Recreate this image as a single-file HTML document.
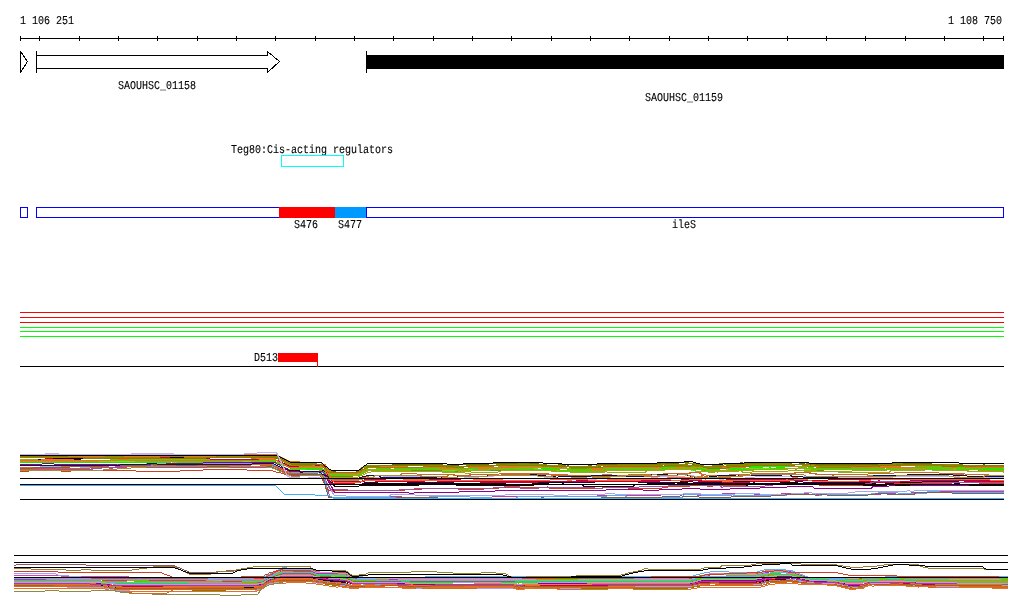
<!DOCTYPE html>
<html><head><meta charset="utf-8"><title>Genome browser</title>
<style>
html,body{margin:0;padding:0;background:#fff;}
svg{display:block;will-change:transform}
.t{font-family:"Liberation Mono","DejaVu Sans Mono",monospace;font-size:12.0px;fill:#000;stroke:#000;stroke-width:0.12px;text-rendering:geometricPrecision;}
</style></head><body>
<svg width="1024" height="611" viewBox="0 0 1024 611" shape-rendering="crispEdges">
<rect x="20" y="38" width="984" height="1" fill="#000"/>
<rect x="20" y="36" width="1" height="5" fill="#000"/>
<rect x="1003" y="36" width="1" height="5" fill="#000"/>
<rect x="39" y="36" width="1" height="5" fill="#000"/>
<rect x="79" y="36" width="1" height="5" fill="#000"/>
<rect x="118" y="36" width="1" height="5" fill="#000"/>
<rect x="157" y="36" width="1" height="5" fill="#000"/>
<rect x="197" y="36" width="1" height="5" fill="#000"/>
<rect x="236" y="36" width="1" height="5" fill="#000"/>
<rect x="275" y="36" width="1" height="5" fill="#000"/>
<rect x="315" y="36" width="1" height="5" fill="#000"/>
<rect x="354" y="36" width="1" height="5" fill="#000"/>
<rect x="393" y="36" width="1" height="5" fill="#000"/>
<rect x="433" y="36" width="1" height="5" fill="#000"/>
<rect x="472" y="36" width="1" height="5" fill="#000"/>
<rect x="511" y="36" width="1" height="5" fill="#000"/>
<rect x="551" y="36" width="1" height="5" fill="#000"/>
<rect x="590" y="36" width="1" height="5" fill="#000"/>
<rect x="629" y="36" width="1" height="5" fill="#000"/>
<rect x="669" y="36" width="1" height="5" fill="#000"/>
<rect x="708" y="36" width="1" height="5" fill="#000"/>
<rect x="747" y="36" width="1" height="5" fill="#000"/>
<rect x="787" y="36" width="1" height="5" fill="#000"/>
<rect x="826" y="36" width="1" height="5" fill="#000"/>
<rect x="865" y="36" width="1" height="5" fill="#000"/>
<rect x="905" y="36" width="1" height="5" fill="#000"/>
<rect x="944" y="36" width="1" height="5" fill="#000"/>
<rect x="983" y="36" width="1" height="5" fill="#000"/>
<text transform="translate(20,24) scale(0.8332,1)" class="t">1 106 251</text>
<text transform="translate(948,24) scale(0.8332,1)" class="t">1 108 750</text>
<polygon points="20.5,51.5 27.5,61.5 20.5,72.5" fill="#fff" stroke="#000" stroke-width="1"/>
<polyline points="36.5,55.5 267.5,55.5 267.5,51.5 279.5,61.5 267.5,72.5 267.5,68.5 36.5,68.5" fill="none" stroke="#000" stroke-width="1"/>
<rect x="36" y="51" width="1" height="22" fill="#000"/>
<text transform="translate(118,89) scale(0.8332,1)" class="t">SAOUHSC_01158</text>
<rect x="366" y="55" width="638" height="14" fill="#000"/>
<rect x="366" y="51" width="1" height="22" fill="#000"/>
<text transform="translate(645,101) scale(0.8332,1)" class="t">SAOUHSC_01159</text>
<text transform="translate(231,153) scale(0.8332,1)" class="t">Teg80:Cis-acting regulators</text>
<rect x="281.5" y="155.5" width="62" height="11" fill="none" stroke="#00ffff" stroke-width="1"/>
<rect x="20.5" y="207.5" width="7" height="10" fill="#fff" stroke="#0000ff" stroke-width="1"/>
<rect x="36.5" y="207.5" width="243" height="10" fill="#fff" stroke="#0000ff" stroke-width="1"/>
<rect x="366.5" y="207.5" width="637" height="10" fill="#fff" stroke="#0000ff" stroke-width="1"/>
<rect x="279" y="207" width="56" height="11" fill="#ff0000"/>
<rect x="335" y="207" width="31" height="11" fill="#0099ff"/>
<text transform="translate(294,228) scale(0.8332,1)" class="t">S476</text>
<text transform="translate(338,228) scale(0.8332,1)" class="t">S477</text>
<text transform="translate(672,228) scale(0.8332,1)" class="t">ileS</text>
<rect x="20" y="312" width="984" height="1" fill="#ff0000"/>
<rect x="20" y="317" width="984" height="1" fill="#ff0000"/>
<rect x="20" y="322" width="984" height="1" fill="#ff0000"/>
<rect x="20" y="327" width="984" height="1" fill="#00ff00"/>
<rect x="20" y="331" width="984" height="1" fill="#00ff00"/>
<rect x="20" y="336" width="984" height="1" fill="#00ff00"/>
<rect x="20" y="366" width="984" height="1" fill="#000"/>
<text transform="translate(254,361) scale(0.8332,1)" class="t">D513</text>
<rect x="278" y="353" width="40" height="9" fill="#ff0000"/>
<rect x="317" y="353" width="1" height="14" fill="#ff0000"/>
<g fill="none" stroke-width="1" stroke-linecap="square" stroke-linejoin="miter">
<polyline points="20.5,459.5 80.5,459.5 81.5,458.5 125.5,458.5 126.5,459.5 275.5,459.5 276.5,460.5 277.5,460.5 278.5,461.5 279.5,461.5 280.5,462.5 282.5,462.5 283.5,463.5 284.5,463.5 285.5,464.5 286.5,464.5 287.5,465.5 288.5,465.5 289.5,466.5 299.5,466.5 300.5,465.5 318.5,465.5 319.5,466.5 320.5,467.5 321.5,468.5 322.5,470.5 323.5,471.5 324.5,472.5 325.5,474.5 326.5,475.5 327.5,477.5 328.5,478.5 329.5,479.5 330.5,481.5 331.5,482.5 332.5,484.5 361.5,484.5 362.5,483.5 363.5,483.5 364.5,482.5 377.5,482.5 378.5,483.5 406.5,483.5 407.5,482.5 453.5,482.5 454.5,483.5 491.5,483.5 492.5,482.5 594.5,482.5 595.5,481.5 637.5,481.5 638.5,482.5 679.5,482.5 680.5,481.5 692.5,481.5 693.5,482.5 721.5,482.5 722.5,481.5 753.5,481.5 754.5,483.5 784.5,483.5 785.5,482.5 794.5,482.5 795.5,481.5 802.5,481.5 803.5,482.5 884.5,482.5 885.5,481.5 886.5,481.5 887.5,482.5 902.5,482.5 903.5,481.5 958.5,481.5 959.5,482.5 1003.5,482.5" stroke="#300040"/>
<polyline points="20.5,457.5 49.5,457.5 50.5,458.5 95.5,458.5 96.5,457.5 199.5,457.5 200.5,456.5 245.5,456.5 246.5,457.5 277.5,457.5 278.5,458.5 279.5,458.5 280.5,459.5 281.5,459.5 282.5,460.5 283.5,460.5 284.5,461.5 285.5,462.5 286.5,462.5 287.5,463.5 288.5,464.5 289.5,465.5 296.5,465.5 297.5,464.5 299.5,464.5 300.5,465.5 308.5,465.5 309.5,464.5 319.5,464.5 320.5,466.5 321.5,467.5 322.5,469.5 323.5,470.5 324.5,472.5 325.5,473.5 326.5,474.5 327.5,476.5 328.5,477.5 329.5,479.5 330.5,480.5 331.5,481.5 332.5,483.5 333.5,484.5 334.5,486.5 358.5,486.5 359.5,485.5 418.5,485.5 419.5,484.5 455.5,484.5 456.5,485.5 533.5,485.5 534.5,484.5 582.5,484.5 583.5,486.5 633.5,486.5 634.5,484.5 676.5,484.5 677.5,483.5 687.5,483.5 688.5,484.5 689.5,484.5 690.5,485.5 747.5,485.5 748.5,484.5 781.5,484.5 782.5,483.5 799.5,483.5 800.5,484.5 844.5,484.5 845.5,485.5 886.5,485.5 887.5,484.5 894.5,484.5 895.5,485.5 921.5,485.5 922.5,484.5 955.5,484.5 956.5,485.5 1003.5,485.5" stroke="#200000"/>
<polyline points="20.5,455.5 120.5,455.5 121.5,456.5 135.5,456.5 136.5,457.5 255.5,457.5 256.5,456.5 277.5,456.5 278.5,457.5 279.5,457.5 280.5,458.5 281.5,458.5 282.5,459.5 283.5,459.5 284.5,460.5 287.5,460.5 288.5,461.5 289.5,461.5 290.5,462.5 291.5,462.5 292.5,463.5 299.5,463.5 300.5,464.5 325.5,464.5 326.5,467.5 327.5,470.5 328.5,473.5 329.5,476.5 330.5,479.5 331.5,481.5 332.5,484.5 363.5,484.5 364.5,483.5 505.5,483.5 506.5,482.5 531.5,482.5 532.5,483.5 548.5,483.5 549.5,482.5 562.5,482.5 563.5,484.5 646.5,484.5 647.5,483.5 674.5,483.5 675.5,482.5 687.5,482.5 688.5,483.5 779.5,483.5 780.5,482.5 797.5,482.5 798.5,483.5 875.5,483.5 876.5,482.5 884.5,482.5 885.5,483.5 897.5,483.5 898.5,482.5 953.5,482.5 954.5,483.5 959.5,483.5 960.5,484.5 992.5,484.5 993.5,482.5 1003.5,482.5" stroke="#100010"/>
<polyline points="20.5,461.5 152.5,461.5 153.5,460.5 176.5,460.5 177.5,459.5 224.5,459.5 225.5,460.5 244.5,460.5 245.5,461.5 275.5,461.5 276.5,462.5 277.5,462.5 278.5,463.5 279.5,463.5 280.5,464.5 281.5,464.5 282.5,465.5 283.5,464.5 284.5,465.5 285.5,465.5 286.5,466.5 287.5,466.5 288.5,467.5 289.5,467.5 290.5,468.5 299.5,468.5 300.5,469.5 318.5,469.5 319.5,470.5 320.5,470.5 321.5,471.5 322.5,471.5 323.5,472.5 324.5,473.5 325.5,473.5 326.5,474.5 327.5,475.5 328.5,475.5 329.5,476.5 352.5,476.5 353.5,475.5 357.5,475.5 358.5,474.5 359.5,474.5 360.5,473.5 361.5,472.5 362.5,471.5 363.5,471.5 364.5,470.5 454.5,470.5 455.5,471.5 470.5,471.5 471.5,470.5 500.5,470.5 501.5,469.5 534.5,469.5 535.5,470.5 550.5,470.5 551.5,471.5 569.5,471.5 570.5,472.5 591.5,472.5 592.5,470.5 604.5,470.5 605.5,469.5 664.5,469.5 665.5,468.5 691.5,468.5 692.5,467.5 694.5,467.5 695.5,468.5 700.5,468.5 701.5,469.5 703.5,469.5 704.5,470.5 707.5,470.5 708.5,471.5 730.5,471.5 731.5,470.5 749.5,470.5 750.5,469.5 751.5,469.5 752.5,468.5 810.5,468.5 811.5,469.5 816.5,469.5 817.5,470.5 823.5,470.5 824.5,469.5 877.5,469.5 878.5,468.5 879.5,468.5 880.5,469.5 931.5,469.5 932.5,470.5 966.5,470.5 967.5,471.5 977.5,471.5 978.5,470.5 1003.5,470.5" stroke="#6b8e23"/>
<polyline points="20.5,461.5 171.5,461.5 172.5,462.5 197.5,462.5 198.5,461.5 258.5,461.5 259.5,462.5 275.5,462.5 276.5,463.5 277.5,463.5 278.5,464.5 279.5,464.5 280.5,465.5 281.5,465.5 282.5,466.5 283.5,466.5 284.5,467.5 285.5,467.5 286.5,469.5 287.5,469.5 288.5,470.5 299.5,470.5 300.5,469.5 323.5,469.5 324.5,470.5 325.5,470.5 326.5,471.5 327.5,471.5 328.5,472.5 329.5,473.5 330.5,473.5 331.5,474.5 335.5,474.5 336.5,475.5 357.5,475.5 358.5,474.5 359.5,474.5 360.5,472.5 362.5,472.5 363.5,471.5 365.5,471.5 366.5,470.5 367.5,470.5 368.5,469.5 441.5,469.5 442.5,470.5 457.5,470.5 458.5,469.5 473.5,469.5 474.5,468.5 487.5,468.5 488.5,467.5 512.5,467.5 513.5,468.5 537.5,468.5 538.5,469.5 556.5,469.5 557.5,470.5 591.5,470.5 592.5,469.5 651.5,469.5 652.5,468.5 687.5,468.5 688.5,469.5 690.5,469.5 691.5,470.5 694.5,470.5 695.5,471.5 717.5,471.5 718.5,470.5 725.5,470.5 726.5,469.5 738.5,469.5 739.5,468.5 803.5,468.5 804.5,469.5 886.5,469.5 887.5,468.5 888.5,468.5 889.5,469.5 939.5,469.5 940.5,468.5 953.5,468.5 954.5,469.5 1003.5,469.5" stroke="#50f010"/>
<polyline points="20.5,468.5 57.5,468.5 58.5,469.5 90.5,469.5 91.5,468.5 100.5,468.5 101.5,467.5 108.5,467.5 109.5,468.5 112.5,468.5 113.5,467.5 126.5,467.5 127.5,466.5 147.5,466.5 148.5,467.5 274.5,467.5 275.5,468.5 277.5,468.5 278.5,469.5 279.5,469.5 280.5,470.5 282.5,470.5 283.5,471.5 284.5,471.5 285.5,472.5 287.5,472.5 288.5,473.5 289.5,473.5 290.5,474.5 299.5,474.5 300.5,475.5 320.5,475.5 321.5,476.5 322.5,478.5 323.5,480.5 324.5,483.5 325.5,485.5 326.5,487.5 327.5,490.5 328.5,492.5 329.5,495.5 330.5,497.5 350.5,497.5 351.5,496.5 401.5,496.5 402.5,497.5 435.5,497.5 436.5,495.5 491.5,495.5 492.5,496.5 596.5,496.5 597.5,495.5 660.5,495.5 661.5,494.5 696.5,494.5 697.5,495.5 720.5,495.5 721.5,494.5 722.5,493.5 753.5,493.5 754.5,494.5 780.5,494.5 781.5,493.5 808.5,493.5 809.5,494.5 831.5,494.5 832.5,493.5 842.5,493.5 843.5,494.5 880.5,494.5 881.5,493.5 895.5,493.5 896.5,494.5 903.5,494.5 904.5,493.5 910.5,493.5 911.5,492.5 938.5,492.5 939.5,491.5 1003.5,491.5" stroke="#c040a0"/>
<polyline points="20.5,460.5 203.5,460.5 204.5,461.5 242.5,461.5 243.5,462.5 261.5,462.5 262.5,461.5 274.5,461.5 275.5,462.5 277.5,462.5 278.5,463.5 279.5,463.5 280.5,464.5 282.5,464.5 283.5,465.5 285.5,465.5 286.5,466.5 287.5,466.5 288.5,467.5 290.5,467.5 291.5,468.5 305.5,468.5 306.5,469.5 318.5,469.5 319.5,470.5 321.5,470.5 322.5,471.5 323.5,471.5 324.5,472.5 326.5,472.5 327.5,473.5 328.5,473.5 329.5,474.5 330.5,474.5 331.5,475.5 358.5,475.5 359.5,474.5 361.5,474.5 362.5,473.5 363.5,473.5 364.5,472.5 365.5,471.5 366.5,470.5 367.5,470.5 368.5,469.5 393.5,469.5 394.5,468.5 443.5,468.5 444.5,469.5 459.5,469.5 460.5,468.5 464.5,468.5 465.5,470.5 489.5,470.5 490.5,469.5 539.5,469.5 540.5,470.5 542.5,470.5 543.5,469.5 558.5,469.5 559.5,470.5 593.5,470.5 594.5,469.5 653.5,469.5 654.5,468.5 680.5,468.5 681.5,467.5 687.5,467.5 688.5,466.5 689.5,466.5 690.5,467.5 692.5,467.5 693.5,468.5 696.5,468.5 697.5,469.5 719.5,469.5 720.5,468.5 740.5,468.5 741.5,467.5 743.5,467.5 744.5,469.5 775.5,469.5 776.5,467.5 784.5,467.5 785.5,466.5 799.5,466.5 800.5,467.5 805.5,467.5 806.5,468.5 810.5,468.5 811.5,469.5 885.5,469.5 886.5,468.5 955.5,468.5 956.5,469.5 1003.5,469.5" stroke="#30e000"/>
<polyline points="20.5,462.5 55.5,462.5 56.5,461.5 77.5,461.5 78.5,460.5 134.5,460.5 135.5,461.5 176.5,461.5 177.5,462.5 274.5,462.5 275.5,463.5 276.5,463.5 277.5,464.5 278.5,464.5 279.5,465.5 280.5,465.5 281.5,466.5 283.5,466.5 284.5,467.5 285.5,467.5 286.5,468.5 287.5,468.5 288.5,469.5 299.5,469.5 300.5,468.5 321.5,468.5 322.5,469.5 323.5,469.5 324.5,470.5 325.5,470.5 326.5,471.5 327.5,471.5 328.5,472.5 329.5,472.5 330.5,473.5 331.5,473.5 332.5,474.5 345.5,474.5 346.5,475.5 355.5,475.5 356.5,474.5 357.5,474.5 358.5,473.5 359.5,472.5 360.5,472.5 361.5,471.5 362.5,471.5 363.5,470.5 364.5,470.5 365.5,469.5 375.5,469.5 376.5,468.5 390.5,468.5 391.5,469.5 438.5,469.5 439.5,468.5 451.5,468.5 452.5,469.5 467.5,469.5 468.5,468.5 476.5,468.5 477.5,469.5 497.5,469.5 498.5,468.5 511.5,468.5 512.5,467.5 547.5,467.5 548.5,468.5 566.5,468.5 567.5,469.5 600.5,469.5 601.5,468.5 661.5,468.5 662.5,467.5 687.5,467.5 688.5,466.5 692.5,466.5 693.5,467.5 697.5,467.5 698.5,468.5 700.5,468.5 701.5,469.5 704.5,469.5 705.5,470.5 727.5,470.5 728.5,469.5 745.5,469.5 746.5,468.5 748.5,468.5 749.5,467.5 762.5,467.5 763.5,466.5 807.5,466.5 808.5,467.5 813.5,467.5 814.5,468.5 856.5,468.5 857.5,467.5 872.5,467.5 873.5,466.5 899.5,466.5 900.5,467.5 930.5,467.5 931.5,468.5 944.5,468.5 945.5,467.5 963.5,467.5 964.5,468.5 1003.5,468.5" stroke="#30e000"/>
<polyline points="20.5,460.5 40.5,460.5 41.5,459.5 73.5,459.5 74.5,460.5 121.5,460.5 122.5,459.5 138.5,459.5 139.5,458.5 201.5,458.5 202.5,459.5 211.5,459.5 212.5,460.5 239.5,460.5 240.5,459.5 271.5,459.5 272.5,460.5 277.5,460.5 278.5,461.5 279.5,462.5 281.5,462.5 282.5,463.5 283.5,464.5 285.5,464.5 286.5,465.5 287.5,466.5 289.5,466.5 290.5,467.5 299.5,467.5 300.5,466.5 323.5,466.5 324.5,468.5 325.5,470.5 326.5,472.5 327.5,474.5 328.5,476.5 329.5,478.5 330.5,480.5 331.5,481.5 363.5,481.5 364.5,480.5 367.5,480.5 368.5,479.5 380.5,479.5 381.5,480.5 402.5,480.5 403.5,479.5 456.5,479.5 457.5,480.5 472.5,480.5 473.5,479.5 502.5,479.5 503.5,478.5 552.5,478.5 553.5,479.5 566.5,479.5 567.5,480.5 571.5,480.5 572.5,481.5 601.5,481.5 602.5,480.5 606.5,480.5 607.5,479.5 648.5,479.5 649.5,478.5 666.5,478.5 667.5,477.5 692.5,477.5 693.5,476.5 702.5,476.5 703.5,477.5 704.5,477.5 705.5,479.5 706.5,480.5 709.5,480.5 710.5,481.5 732.5,481.5 733.5,480.5 753.5,480.5 754.5,479.5 791.5,479.5 792.5,477.5 797.5,477.5 798.5,476.5 812.5,476.5 813.5,477.5 818.5,477.5 819.5,478.5 827.5,478.5 828.5,479.5 878.5,479.5 879.5,478.5 962.5,478.5 963.5,479.5 968.5,479.5 969.5,480.5 1003.5,480.5" stroke="#f07030"/>
<polyline points="20.5,461.5 50.5,461.5 51.5,460.5 88.5,460.5 89.5,461.5 98.5,461.5 99.5,460.5 109.5,460.5 110.5,459.5 275.5,459.5 276.5,460.5 277.5,460.5 278.5,461.5 279.5,461.5 280.5,462.5 281.5,462.5 282.5,463.5 283.5,464.5 284.5,464.5 285.5,465.5 286.5,465.5 287.5,466.5 288.5,466.5 289.5,467.5 297.5,467.5 298.5,468.5 299.5,468.5 300.5,467.5 317.5,467.5 318.5,469.5 319.5,469.5 320.5,470.5 321.5,470.5 322.5,471.5 323.5,472.5 324.5,473.5 325.5,474.5 326.5,474.5 327.5,475.5 328.5,476.5 329.5,477.5 357.5,477.5 358.5,476.5 359.5,476.5 360.5,475.5 362.5,475.5 363.5,474.5 364.5,474.5 365.5,473.5 366.5,473.5 367.5,472.5 370.5,472.5 371.5,471.5 454.5,471.5 455.5,472.5 464.5,472.5 465.5,473.5 470.5,473.5 471.5,472.5 497.5,472.5 498.5,471.5 500.5,471.5 501.5,470.5 550.5,470.5 551.5,471.5 569.5,471.5 570.5,472.5 604.5,472.5 605.5,471.5 606.5,471.5 607.5,472.5 645.5,472.5 646.5,470.5 664.5,470.5 665.5,469.5 690.5,469.5 691.5,468.5 692.5,468.5 693.5,469.5 700.5,469.5 701.5,470.5 703.5,470.5 704.5,471.5 707.5,471.5 708.5,472.5 714.5,472.5 715.5,471.5 730.5,471.5 731.5,470.5 741.5,470.5 742.5,472.5 751.5,472.5 752.5,471.5 787.5,471.5 788.5,470.5 816.5,470.5 817.5,471.5 837.5,471.5 838.5,472.5 889.5,472.5 890.5,470.5 897.5,470.5 898.5,469.5 931.5,469.5 932.5,470.5 966.5,470.5 967.5,471.5 1002.5,471.5 1003.5,472.5" stroke="#9aaa10"/>
<polyline points="20.5,471.5 28.5,471.5 29.5,470.5 38.5,470.5 39.5,469.5 48.5,469.5 49.5,470.5 60.5,470.5 61.5,471.5 70.5,471.5 71.5,470.5 135.5,470.5 136.5,471.5 179.5,471.5 180.5,470.5 202.5,470.5 203.5,469.5 246.5,469.5 247.5,470.5 272.5,470.5 273.5,471.5 275.5,471.5 276.5,472.5 280.5,472.5 281.5,473.5 283.5,473.5 284.5,474.5 286.5,474.5 287.5,473.5 288.5,474.5 312.5,474.5 313.5,475.5 319.5,475.5 320.5,476.5 321.5,477.5 322.5,479.5 323.5,481.5 324.5,483.5 325.5,485.5 326.5,486.5 327.5,488.5 328.5,490.5 404.5,490.5 405.5,489.5 421.5,489.5 422.5,488.5 457.5,488.5 458.5,489.5 483.5,489.5 484.5,488.5 498.5,488.5 499.5,487.5 546.5,487.5 547.5,486.5 548.5,487.5 549.5,488.5 601.5,488.5 602.5,487.5 627.5,487.5 628.5,488.5 661.5,488.5 662.5,487.5 667.5,487.5 668.5,486.5 689.5,486.5 690.5,485.5 706.5,485.5 707.5,486.5 712.5,486.5 713.5,485.5 745.5,485.5 746.5,486.5 764.5,486.5 765.5,485.5 766.5,484.5 818.5,484.5 819.5,485.5 862.5,485.5 863.5,484.5 864.5,484.5 865.5,483.5 871.5,483.5 872.5,482.5 893.5,482.5 894.5,483.5 951.5,483.5 952.5,484.5 978.5,484.5 979.5,483.5 1003.5,483.5" stroke="#d04020"/>
<polyline points="20.5,454.5 44.5,454.5 45.5,453.5 58.5,453.5 59.5,454.5 130.5,454.5 131.5,453.5 173.5,453.5 174.5,454.5 195.5,454.5 196.5,455.5 230.5,455.5 231.5,454.5 254.5,454.5 255.5,455.5 276.5,455.5 277.5,457.5 278.5,459.5 279.5,460.5 280.5,462.5 281.5,464.5 282.5,466.5 283.5,467.5 284.5,469.5 285.5,471.5 286.5,473.5 287.5,474.5 288.5,475.5 289.5,477.5 299.5,477.5 300.5,478.5 307.5,478.5 308.5,477.5 319.5,477.5 320.5,478.5 324.5,478.5 325.5,479.5 328.5,479.5 329.5,480.5 357.5,480.5 358.5,479.5 360.5,479.5 361.5,478.5 363.5,478.5 364.5,477.5 382.5,477.5 383.5,476.5 419.5,476.5 420.5,477.5 447.5,477.5 448.5,478.5 463.5,478.5 464.5,477.5 478.5,477.5 479.5,476.5 493.5,476.5 494.5,475.5 536.5,475.5 537.5,476.5 543.5,476.5 544.5,477.5 557.5,477.5 558.5,478.5 562.5,478.5 563.5,479.5 596.5,479.5 597.5,478.5 609.5,478.5 610.5,476.5 650.5,476.5 651.5,477.5 657.5,477.5 658.5,476.5 684.5,476.5 685.5,475.5 693.5,475.5 694.5,476.5 696.5,476.5 697.5,477.5 700.5,477.5 701.5,478.5 718.5,478.5 719.5,479.5 723.5,479.5 724.5,478.5 744.5,478.5 745.5,477.5 754.5,477.5 755.5,476.5 809.5,476.5 810.5,478.5 821.5,478.5 822.5,477.5 892.5,477.5 893.5,476.5 959.5,476.5 960.5,477.5 1003.5,477.5" stroke="#c8b0e8"/>
<polyline points="20.5,465.5 39.5,465.5 40.5,466.5 79.5,466.5 80.5,467.5 95.5,467.5 96.5,466.5 97.5,465.5 127.5,465.5 128.5,464.5 145.5,464.5 146.5,463.5 221.5,463.5 222.5,464.5 264.5,464.5 265.5,465.5 271.5,465.5 272.5,466.5 273.5,466.5 274.5,467.5 275.5,467.5 276.5,468.5 278.5,468.5 279.5,469.5 280.5,469.5 281.5,470.5 283.5,470.5 284.5,471.5 285.5,471.5 286.5,472.5 287.5,472.5 288.5,473.5 291.5,473.5 292.5,472.5 319.5,472.5 320.5,474.5 321.5,476.5 322.5,477.5 323.5,478.5 324.5,480.5 325.5,482.5 326.5,483.5 327.5,484.5 328.5,486.5 329.5,488.5 330.5,489.5 331.5,490.5 332.5,492.5 333.5,494.5 334.5,495.5 345.5,495.5 346.5,496.5 389.5,496.5 390.5,494.5 414.5,494.5 415.5,495.5 504.5,495.5 505.5,494.5 553.5,494.5 554.5,495.5 567.5,495.5 568.5,494.5 604.5,494.5 605.5,493.5 614.5,493.5 615.5,494.5 682.5,494.5 683.5,493.5 700.5,493.5 701.5,494.5 734.5,494.5 735.5,493.5 759.5,493.5 760.5,494.5 790.5,494.5 791.5,493.5 803.5,493.5 804.5,492.5 811.5,492.5 812.5,493.5 847.5,493.5 848.5,492.5 854.5,492.5 855.5,491.5 906.5,491.5 907.5,490.5 909.5,490.5 910.5,491.5 913.5,491.5 914.5,490.5 1003.5,490.5" stroke="#a8a8e8"/>
<polyline points="20.5,462.5 170.5,462.5 171.5,461.5 209.5,461.5 210.5,462.5 250.5,462.5 251.5,461.5 274.5,461.5 275.5,462.5 277.5,462.5 278.5,463.5 279.5,463.5 280.5,464.5 282.5,464.5 283.5,465.5 285.5,465.5 286.5,466.5 287.5,466.5 288.5,467.5 290.5,467.5 291.5,468.5 312.5,468.5 313.5,469.5 324.5,469.5 325.5,470.5 326.5,471.5 327.5,473.5 328.5,475.5 360.5,475.5 361.5,473.5 362.5,472.5 363.5,470.5 364.5,467.5 413.5,467.5 414.5,468.5 444.5,468.5 445.5,469.5 460.5,469.5 461.5,468.5 490.5,468.5 491.5,467.5 540.5,467.5 541.5,468.5 547.5,468.5 548.5,469.5 559.5,469.5 560.5,470.5 573.5,470.5 574.5,469.5 593.5,469.5 594.5,468.5 654.5,468.5 655.5,467.5 679.5,467.5 680.5,466.5 681.5,466.5 682.5,465.5 690.5,465.5 691.5,466.5 693.5,466.5 694.5,467.5 697.5,467.5 698.5,468.5 720.5,468.5 721.5,467.5 741.5,467.5 742.5,466.5 769.5,466.5 770.5,468.5 798.5,468.5 799.5,466.5 800.5,466.5 801.5,467.5 806.5,467.5 807.5,468.5 884.5,468.5 885.5,467.5 914.5,467.5 915.5,466.5 956.5,466.5 957.5,467.5 974.5,467.5 975.5,468.5 1003.5,468.5" stroke="#30e000"/>
<polyline points="20.5,467.5 62.5,467.5 63.5,466.5 100.5,466.5 101.5,465.5 126.5,465.5 127.5,464.5 129.5,464.5 130.5,465.5 241.5,465.5 242.5,464.5 262.5,464.5 263.5,463.5 271.5,463.5 272.5,464.5 273.5,464.5 274.5,465.5 276.5,465.5 277.5,466.5 278.5,466.5 279.5,467.5 281.5,467.5 282.5,468.5 283.5,468.5 284.5,469.5 286.5,469.5 287.5,470.5 288.5,470.5 289.5,471.5 299.5,471.5 300.5,472.5 310.5,472.5 311.5,471.5 320.5,471.5 321.5,472.5 322.5,472.5 323.5,473.5 324.5,474.5 325.5,475.5 326.5,476.5 327.5,477.5 328.5,478.5 329.5,478.5 330.5,479.5 331.5,480.5 332.5,481.5 361.5,481.5 362.5,480.5 363.5,480.5 364.5,479.5 385.5,479.5 386.5,481.5 413.5,481.5 414.5,480.5 428.5,480.5 429.5,479.5 460.5,479.5 461.5,481.5 575.5,481.5 576.5,480.5 680.5,480.5 681.5,479.5 693.5,479.5 694.5,480.5 725.5,480.5 726.5,479.5 785.5,479.5 786.5,478.5 787.5,478.5 788.5,479.5 803.5,479.5 804.5,480.5 827.5,480.5 828.5,479.5 878.5,479.5 879.5,481.5 910.5,481.5 911.5,480.5 931.5,480.5 932.5,479.5 959.5,479.5 960.5,480.5 1003.5,480.5" stroke="#c00040"/>
<polyline points="20.5,455.5 76.5,455.5 77.5,454.5 276.5,454.5 277.5,455.5 278.5,455.5 279.5,456.5 280.5,456.5 281.5,457.5 282.5,457.5 283.5,458.5 284.5,458.5 285.5,459.5 286.5,459.5 287.5,460.5 288.5,460.5 289.5,461.5 299.5,461.5 300.5,462.5 320.5,462.5 321.5,463.5 322.5,464.5 323.5,465.5 324.5,466.5 325.5,467.5 326.5,467.5 327.5,468.5 328.5,469.5 329.5,470.5 330.5,471.5 331.5,471.5 332.5,472.5 333.5,473.5 358.5,473.5 359.5,472.5 360.5,472.5 361.5,471.5 362.5,471.5 363.5,470.5 364.5,469.5 365.5,469.5 366.5,468.5 367.5,468.5 368.5,467.5 453.5,467.5 454.5,468.5 469.5,468.5 470.5,467.5 477.5,467.5 478.5,468.5 499.5,468.5 500.5,467.5 527.5,467.5 528.5,465.5 549.5,465.5 550.5,466.5 568.5,466.5 569.5,467.5 572.5,467.5 573.5,468.5 591.5,468.5 592.5,469.5 602.5,469.5 603.5,468.5 618.5,468.5 619.5,466.5 663.5,466.5 664.5,465.5 675.5,465.5 676.5,467.5 689.5,467.5 690.5,466.5 699.5,466.5 700.5,467.5 702.5,467.5 703.5,468.5 705.5,468.5 706.5,467.5 707.5,468.5 729.5,468.5 730.5,467.5 745.5,467.5 746.5,466.5 750.5,466.5 751.5,465.5 790.5,465.5 791.5,466.5 815.5,466.5 816.5,467.5 875.5,467.5 876.5,466.5 887.5,466.5 888.5,467.5 956.5,467.5 957.5,466.5 965.5,466.5 966.5,467.5 1003.5,467.5" stroke="#e07820"/>
<polyline points="20.5,457.5 34.5,457.5 35.5,456.5 65.5,456.5 66.5,457.5 110.5,457.5 111.5,456.5 218.5,456.5 219.5,457.5 250.5,457.5 251.5,458.5 277.5,458.5 278.5,459.5 279.5,459.5 280.5,460.5 281.5,460.5 282.5,461.5 283.5,461.5 284.5,462.5 285.5,462.5 286.5,463.5 287.5,463.5 288.5,464.5 289.5,464.5 290.5,465.5 299.5,465.5 300.5,464.5 319.5,464.5 320.5,465.5 321.5,466.5 322.5,466.5 323.5,467.5 324.5,468.5 325.5,468.5 326.5,469.5 327.5,470.5 328.5,470.5 329.5,471.5 330.5,472.5 355.5,472.5 356.5,471.5 357.5,470.5 358.5,470.5 359.5,469.5 360.5,469.5 361.5,468.5 362.5,468.5 363.5,467.5 364.5,467.5 365.5,466.5 366.5,466.5 367.5,465.5 449.5,465.5 450.5,466.5 465.5,466.5 466.5,465.5 495.5,465.5 496.5,464.5 545.5,464.5 546.5,465.5 564.5,465.5 565.5,466.5 599.5,466.5 600.5,465.5 659.5,465.5 660.5,464.5 686.5,464.5 687.5,463.5 695.5,463.5 696.5,464.5 698.5,464.5 699.5,465.5 702.5,465.5 703.5,466.5 725.5,466.5 726.5,465.5 746.5,465.5 747.5,464.5 801.5,464.5 802.5,462.5 805.5,462.5 806.5,463.5 811.5,463.5 812.5,464.5 831.5,464.5 832.5,465.5 891.5,465.5 892.5,464.5 961.5,464.5 962.5,465.5 1003.5,465.5" stroke="#8c8c00"/>
<polyline points="20.5,469.5 92.5,469.5 93.5,468.5 101.5,468.5 102.5,467.5 114.5,467.5 115.5,466.5 135.5,466.5 136.5,467.5 180.5,467.5 181.5,466.5 263.5,466.5 264.5,465.5 273.5,465.5 274.5,466.5 275.5,466.5 276.5,467.5 277.5,467.5 278.5,468.5 279.5,468.5 280.5,469.5 282.5,469.5 283.5,470.5 284.5,470.5 285.5,471.5 286.5,471.5 287.5,472.5 288.5,472.5 289.5,473.5 299.5,473.5 300.5,475.5 310.5,475.5 311.5,474.5 322.5,474.5 323.5,476.5 324.5,478.5 325.5,480.5 326.5,482.5 327.5,484.5 328.5,485.5 329.5,487.5 330.5,489.5 347.5,489.5 348.5,490.5 398.5,490.5 399.5,489.5 413.5,489.5 414.5,488.5 492.5,488.5 493.5,487.5 503.5,487.5 504.5,486.5 519.5,486.5 520.5,488.5 538.5,488.5 539.5,487.5 594.5,487.5 595.5,488.5 602.5,488.5 603.5,487.5 638.5,487.5 639.5,486.5 667.5,486.5 668.5,485.5 690.5,485.5 691.5,484.5 698.5,484.5 699.5,485.5 720.5,485.5 721.5,487.5 722.5,487.5 723.5,486.5 764.5,486.5 765.5,485.5 772.5,485.5 773.5,484.5 866.5,484.5 867.5,483.5 869.5,483.5 870.5,482.5 873.5,482.5 874.5,481.5 921.5,481.5 922.5,482.5 1003.5,482.5" stroke="#a050a0"/>
<polyline points="20.5,465.5 61.5,465.5 62.5,466.5 100.5,466.5 101.5,465.5 113.5,465.5 114.5,464.5 131.5,464.5 132.5,465.5 171.5,465.5 172.5,464.5 180.5,464.5 181.5,463.5 270.5,463.5 271.5,464.5 273.5,464.5 274.5,465.5 275.5,465.5 276.5,466.5 277.5,466.5 278.5,467.5 279.5,467.5 280.5,468.5 281.5,468.5 282.5,469.5 283.5,469.5 284.5,470.5 285.5,470.5 286.5,471.5 287.5,471.5 288.5,472.5 323.5,472.5 324.5,477.5 325.5,482.5 326.5,487.5 327.5,492.5 328.5,497.5 428.5,497.5 429.5,496.5 469.5,496.5 470.5,497.5 491.5,497.5 492.5,498.5 516.5,498.5 517.5,496.5 606.5,496.5 607.5,495.5 625.5,495.5 626.5,497.5 682.5,497.5 683.5,495.5 684.5,494.5 700.5,494.5 701.5,495.5 731.5,495.5 732.5,496.5 733.5,495.5 786.5,495.5 787.5,494.5 815.5,494.5 816.5,495.5 821.5,495.5 822.5,494.5 870.5,494.5 871.5,493.5 877.5,493.5 878.5,492.5 897.5,492.5 898.5,493.5 926.5,493.5 927.5,491.5 939.5,491.5 940.5,492.5 1003.5,492.5" stroke="#60a8f8"/>
<polyline points="20.5,456.5 39.5,456.5 40.5,455.5 104.5,455.5 105.5,456.5 204.5,456.5 205.5,457.5 239.5,457.5 240.5,456.5 270.5,456.5 271.5,457.5 275.5,457.5 276.5,458.5 278.5,458.5 279.5,459.5 280.5,460.5 282.5,460.5 283.5,461.5 284.5,462.5 286.5,462.5 287.5,463.5 288.5,464.5 290.5,464.5 291.5,465.5 299.5,465.5 300.5,464.5 320.5,464.5 321.5,465.5 322.5,465.5 323.5,466.5 324.5,466.5 325.5,467.5 326.5,467.5 327.5,468.5 328.5,468.5 329.5,469.5 330.5,469.5 331.5,470.5 332.5,470.5 333.5,471.5 335.5,471.5 336.5,472.5 355.5,472.5 356.5,471.5 357.5,470.5 358.5,470.5 359.5,469.5 360.5,468.5 361.5,467.5 362.5,467.5 363.5,466.5 364.5,465.5 391.5,465.5 392.5,464.5 442.5,464.5 443.5,465.5 458.5,465.5 459.5,464.5 488.5,464.5 489.5,463.5 538.5,463.5 539.5,464.5 543.5,464.5 544.5,463.5 557.5,463.5 558.5,464.5 567.5,464.5 568.5,466.5 587.5,466.5 588.5,465.5 591.5,465.5 592.5,464.5 652.5,464.5 653.5,463.5 678.5,463.5 679.5,462.5 688.5,462.5 689.5,463.5 691.5,463.5 692.5,464.5 695.5,464.5 696.5,465.5 698.5,465.5 699.5,464.5 718.5,464.5 719.5,463.5 739.5,463.5 740.5,462.5 742.5,462.5 743.5,463.5 783.5,463.5 784.5,462.5 798.5,462.5 799.5,463.5 804.5,463.5 805.5,464.5 887.5,464.5 888.5,463.5 931.5,463.5 932.5,464.5 954.5,464.5 955.5,465.5 983.5,465.5 984.5,463.5 1003.5,463.5" stroke="#6b6b00"/>
<polyline points="20.5,455.5 72.5,455.5 73.5,456.5 114.5,456.5 115.5,455.5 179.5,455.5 180.5,456.5 228.5,456.5 229.5,457.5 240.5,457.5 241.5,456.5 276.5,456.5 277.5,457.5 278.5,457.5 279.5,458.5 280.5,458.5 281.5,459.5 282.5,459.5 283.5,460.5 284.5,461.5 285.5,461.5 286.5,462.5 289.5,462.5 290.5,463.5 299.5,463.5 300.5,464.5 319.5,464.5 320.5,465.5 321.5,466.5 322.5,466.5 323.5,467.5 324.5,467.5 325.5,468.5 326.5,468.5 327.5,469.5 328.5,469.5 329.5,470.5 330.5,470.5 331.5,471.5 332.5,471.5 333.5,472.5 337.5,472.5 338.5,473.5 351.5,473.5 352.5,472.5 357.5,472.5 358.5,471.5 359.5,470.5 360.5,469.5 361.5,468.5 362.5,467.5 363.5,466.5 364.5,465.5 450.5,465.5 451.5,466.5 466.5,466.5 467.5,465.5 496.5,465.5 497.5,464.5 516.5,464.5 517.5,463.5 528.5,463.5 529.5,464.5 546.5,464.5 547.5,465.5 565.5,465.5 566.5,466.5 600.5,466.5 601.5,465.5 616.5,465.5 617.5,464.5 660.5,464.5 661.5,463.5 664.5,463.5 665.5,464.5 687.5,464.5 688.5,463.5 696.5,463.5 697.5,464.5 699.5,464.5 700.5,465.5 703.5,465.5 704.5,466.5 726.5,466.5 727.5,465.5 738.5,465.5 739.5,464.5 747.5,464.5 748.5,463.5 791.5,463.5 792.5,462.5 806.5,462.5 807.5,463.5 812.5,463.5 813.5,464.5 814.5,464.5 815.5,466.5 879.5,466.5 880.5,465.5 888.5,465.5 889.5,464.5 962.5,464.5 963.5,465.5 1003.5,465.5" stroke="#808000"/>
<polyline points="20.5,461.5 94.5,461.5 95.5,460.5 186.5,460.5 187.5,459.5 248.5,459.5 249.5,460.5 263.5,460.5 264.5,459.5 274.5,459.5 275.5,460.5 276.5,460.5 277.5,461.5 278.5,461.5 279.5,462.5 281.5,462.5 282.5,463.5 283.5,463.5 284.5,464.5 286.5,464.5 287.5,465.5 288.5,466.5 289.5,467.5 290.5,467.5 291.5,468.5 299.5,468.5 300.5,467.5 323.5,467.5 324.5,468.5 325.5,469.5 326.5,471.5 327.5,472.5 328.5,474.5 347.5,474.5 348.5,475.5 357.5,475.5 358.5,474.5 360.5,474.5 361.5,473.5 362.5,473.5 363.5,472.5 365.5,472.5 366.5,471.5 367.5,471.5 368.5,470.5 410.5,470.5 411.5,471.5 441.5,471.5 442.5,472.5 457.5,472.5 458.5,471.5 469.5,471.5 470.5,470.5 487.5,470.5 488.5,468.5 533.5,468.5 534.5,469.5 537.5,469.5 538.5,470.5 556.5,470.5 557.5,471.5 590.5,471.5 591.5,470.5 651.5,470.5 652.5,469.5 677.5,469.5 678.5,468.5 679.5,468.5 680.5,467.5 687.5,467.5 688.5,468.5 690.5,468.5 691.5,469.5 694.5,469.5 695.5,470.5 696.5,471.5 716.5,471.5 717.5,472.5 718.5,471.5 738.5,471.5 739.5,470.5 746.5,470.5 747.5,469.5 782.5,469.5 783.5,468.5 795.5,468.5 796.5,470.5 803.5,470.5 804.5,471.5 851.5,471.5 852.5,470.5 886.5,470.5 887.5,469.5 891.5,469.5 892.5,470.5 924.5,470.5 925.5,469.5 953.5,469.5 954.5,470.5 968.5,470.5 969.5,469.5 982.5,469.5 983.5,470.5 998.5,470.5 999.5,471.5 1003.5,471.5" stroke="#9aaa10"/>
<polyline points="20.5,467.5 60.5,467.5 61.5,466.5 89.5,466.5 90.5,465.5 113.5,465.5 114.5,464.5 132.5,464.5 133.5,465.5 142.5,465.5 143.5,464.5 271.5,464.5 272.5,465.5 273.5,465.5 274.5,466.5 276.5,466.5 277.5,467.5 278.5,467.5 279.5,468.5 281.5,468.5 282.5,469.5 283.5,469.5 284.5,470.5 285.5,470.5 286.5,471.5 288.5,471.5 289.5,472.5 290.5,472.5 291.5,473.5 299.5,473.5 300.5,474.5 322.5,474.5 323.5,475.5 324.5,475.5 325.5,476.5 326.5,476.5 327.5,477.5 328.5,477.5 329.5,478.5 346.5,478.5 347.5,479.5 361.5,479.5 362.5,478.5 363.5,478.5 364.5,477.5 365.5,477.5 366.5,476.5 367.5,476.5 368.5,475.5 400.5,475.5 401.5,473.5 416.5,473.5 417.5,474.5 452.5,474.5 453.5,475.5 468.5,475.5 469.5,474.5 498.5,474.5 499.5,473.5 548.5,473.5 549.5,474.5 567.5,474.5 568.5,475.5 601.5,475.5 602.5,474.5 611.5,474.5 612.5,475.5 627.5,475.5 628.5,474.5 662.5,474.5 663.5,473.5 688.5,473.5 689.5,472.5 698.5,472.5 699.5,473.5 701.5,473.5 702.5,474.5 705.5,474.5 706.5,475.5 728.5,475.5 729.5,474.5 749.5,474.5 750.5,473.5 793.5,473.5 794.5,472.5 808.5,472.5 809.5,473.5 814.5,473.5 815.5,474.5 867.5,474.5 868.5,473.5 893.5,473.5 894.5,472.5 938.5,472.5 939.5,473.5 964.5,473.5 965.5,474.5 988.5,474.5 989.5,475.5 1003.5,475.5" stroke="#d06828"/>
<polyline points="20.5,455.5 56.5,455.5 57.5,456.5 124.5,456.5 125.5,455.5 275.5,455.5 276.5,456.5 277.5,456.5 278.5,457.5 279.5,457.5 280.5,458.5 281.5,458.5 282.5,459.5 283.5,459.5 284.5,460.5 285.5,460.5 286.5,461.5 287.5,461.5 288.5,462.5 289.5,462.5 290.5,463.5 297.5,463.5 298.5,464.5 299.5,464.5 300.5,463.5 316.5,463.5 317.5,464.5 321.5,464.5 322.5,465.5 323.5,466.5 324.5,466.5 325.5,467.5 326.5,468.5 327.5,468.5 328.5,469.5 329.5,470.5 330.5,470.5 331.5,471.5 332.5,472.5 360.5,472.5 361.5,470.5 362.5,468.5 363.5,467.5 364.5,465.5 447.5,465.5 448.5,466.5 461.5,466.5 462.5,467.5 463.5,467.5 464.5,466.5 493.5,466.5 494.5,465.5 495.5,465.5 496.5,464.5 543.5,464.5 544.5,465.5 562.5,465.5 563.5,466.5 597.5,466.5 598.5,465.5 607.5,465.5 608.5,466.5 657.5,466.5 658.5,465.5 660.5,465.5 661.5,464.5 684.5,464.5 685.5,463.5 693.5,463.5 694.5,464.5 696.5,464.5 697.5,465.5 700.5,465.5 701.5,466.5 711.5,466.5 712.5,465.5 723.5,465.5 724.5,464.5 744.5,464.5 745.5,463.5 747.5,463.5 748.5,464.5 760.5,464.5 761.5,463.5 788.5,463.5 789.5,464.5 809.5,464.5 810.5,465.5 814.5,465.5 815.5,466.5 877.5,466.5 878.5,464.5 892.5,464.5 893.5,463.5 902.5,463.5 903.5,465.5 944.5,465.5 945.5,464.5 959.5,464.5 960.5,465.5 1003.5,465.5" stroke="#8c8c00"/>
<polyline points="20.5,469.5 55.5,469.5 56.5,468.5 89.5,468.5 90.5,467.5 100.5,467.5 101.5,466.5 108.5,466.5 109.5,465.5 121.5,465.5 122.5,466.5 152.5,466.5 153.5,465.5 250.5,465.5 251.5,466.5 259.5,466.5 260.5,465.5 272.5,465.5 273.5,466.5 274.5,466.5 275.5,467.5 276.5,467.5 277.5,468.5 278.5,468.5 279.5,469.5 281.5,469.5 282.5,470.5 283.5,470.5 284.5,471.5 285.5,471.5 286.5,472.5 287.5,472.5 288.5,473.5 317.5,473.5 318.5,474.5 321.5,474.5 322.5,475.5 323.5,476.5 324.5,476.5 325.5,477.5 326.5,477.5 327.5,478.5 328.5,479.5 358.5,479.5 359.5,478.5 361.5,478.5 362.5,477.5 364.5,477.5 365.5,476.5 368.5,476.5 369.5,475.5 419.5,475.5 420.5,476.5 447.5,476.5 448.5,474.5 454.5,474.5 455.5,475.5 470.5,475.5 471.5,474.5 491.5,474.5 492.5,475.5 500.5,475.5 501.5,474.5 550.5,474.5 551.5,475.5 569.5,475.5 570.5,476.5 659.5,476.5 660.5,474.5 664.5,474.5 665.5,473.5 690.5,473.5 691.5,472.5 700.5,472.5 701.5,475.5 703.5,475.5 704.5,476.5 707.5,476.5 708.5,477.5 730.5,477.5 731.5,476.5 742.5,476.5 743.5,475.5 751.5,475.5 752.5,474.5 786.5,474.5 787.5,473.5 795.5,473.5 796.5,472.5 810.5,472.5 811.5,473.5 816.5,473.5 817.5,474.5 832.5,474.5 833.5,476.5 881.5,476.5 882.5,475.5 918.5,475.5 919.5,474.5 963.5,474.5 964.5,475.5 966.5,475.5 967.5,476.5 1003.5,476.5" stroke="#c86428"/>
<polyline points="20.5,464.5 41.5,464.5 42.5,463.5 53.5,463.5 54.5,464.5 165.5,464.5 166.5,463.5 202.5,463.5 203.5,462.5 275.5,462.5 276.5,463.5 277.5,464.5 279.5,464.5 280.5,465.5 281.5,466.5 283.5,466.5 284.5,467.5 285.5,468.5 287.5,468.5 288.5,469.5 289.5,470.5 299.5,470.5 300.5,471.5 322.5,471.5 323.5,472.5 324.5,473.5 325.5,475.5 326.5,477.5 327.5,479.5 328.5,481.5 329.5,483.5 330.5,485.5 331.5,486.5 332.5,488.5 333.5,490.5 334.5,492.5 408.5,492.5 409.5,493.5 413.5,493.5 414.5,492.5 458.5,492.5 459.5,491.5 494.5,491.5 495.5,490.5 605.5,490.5 606.5,489.5 642.5,489.5 643.5,490.5 658.5,490.5 659.5,489.5 681.5,489.5 682.5,488.5 699.5,488.5 700.5,489.5 729.5,489.5 730.5,488.5 759.5,488.5 760.5,487.5 786.5,487.5 787.5,486.5 812.5,486.5 813.5,487.5 814.5,488.5 871.5,488.5 872.5,486.5 888.5,486.5 889.5,485.5 894.5,485.5 895.5,484.5 909.5,484.5 910.5,485.5 968.5,485.5 969.5,484.5 1003.5,484.5" stroke="#900090"/>
<polyline points="20.5,457.5 44.5,457.5 45.5,458.5 52.5,458.5 53.5,457.5 112.5,457.5 113.5,458.5 149.5,458.5 150.5,457.5 169.5,457.5 170.5,458.5 209.5,458.5 210.5,459.5 275.5,459.5 276.5,460.5 278.5,460.5 279.5,461.5 280.5,462.5 282.5,462.5 283.5,463.5 284.5,464.5 286.5,464.5 287.5,465.5 288.5,466.5 299.5,466.5 300.5,465.5 323.5,465.5 324.5,466.5 325.5,468.5 326.5,471.5 327.5,474.5 328.5,477.5 329.5,480.5 330.5,483.5 354.5,483.5 355.5,482.5 360.5,482.5 361.5,481.5 364.5,481.5 365.5,480.5 374.5,480.5 375.5,481.5 424.5,481.5 425.5,480.5 436.5,480.5 437.5,481.5 479.5,481.5 480.5,482.5 537.5,482.5 538.5,481.5 659.5,481.5 660.5,480.5 683.5,480.5 684.5,481.5 685.5,480.5 697.5,480.5 698.5,481.5 721.5,481.5 722.5,482.5 749.5,482.5 750.5,481.5 789.5,481.5 790.5,480.5 804.5,480.5 805.5,479.5 807.5,479.5 808.5,480.5 819.5,480.5 820.5,481.5 873.5,481.5 874.5,482.5 899.5,482.5 900.5,481.5 909.5,481.5 910.5,480.5 963.5,480.5 964.5,481.5 1003.5,481.5" stroke="#c00040"/>
<polyline points="20.5,468.5 32.5,468.5 33.5,467.5 69.5,467.5 70.5,466.5 102.5,466.5 103.5,465.5 116.5,465.5 117.5,464.5 118.5,465.5 150.5,465.5 151.5,464.5 175.5,464.5 176.5,465.5 196.5,465.5 197.5,466.5 271.5,466.5 272.5,467.5 273.5,467.5 274.5,468.5 275.5,468.5 276.5,469.5 277.5,469.5 278.5,470.5 280.5,470.5 281.5,471.5 282.5,471.5 283.5,472.5 284.5,472.5 285.5,473.5 286.5,473.5 287.5,474.5 288.5,474.5 289.5,475.5 299.5,475.5 300.5,474.5 322.5,474.5 323.5,478.5 324.5,482.5 325.5,486.5 326.5,490.5 327.5,493.5 328.5,497.5 437.5,497.5 438.5,498.5 540.5,498.5 541.5,497.5 543.5,497.5 544.5,498.5 600.5,498.5 601.5,497.5 661.5,497.5 662.5,496.5 679.5,496.5 680.5,495.5 681.5,495.5 682.5,496.5 698.5,496.5 699.5,497.5 730.5,497.5 731.5,496.5 770.5,496.5 771.5,495.5 784.5,495.5 785.5,494.5 814.5,494.5 815.5,495.5 818.5,495.5 819.5,494.5 826.5,494.5 827.5,495.5 867.5,495.5 868.5,494.5 874.5,494.5 875.5,493.5 886.5,493.5 887.5,494.5 914.5,494.5 915.5,492.5 951.5,492.5 952.5,493.5 1003.5,493.5" stroke="#806050"/>
<polyline points="20.5,456.5 104.5,456.5 105.5,457.5 123.5,457.5 124.5,456.5 215.5,456.5 216.5,457.5 255.5,457.5 256.5,458.5 273.5,458.5 274.5,457.5 277.5,457.5 278.5,458.5 279.5,458.5 280.5,459.5 281.5,459.5 282.5,460.5 283.5,460.5 284.5,461.5 285.5,462.5 286.5,462.5 287.5,463.5 288.5,463.5 289.5,464.5 299.5,464.5 300.5,465.5 314.5,465.5 315.5,464.5 325.5,464.5 326.5,467.5 327.5,469.5 328.5,471.5 329.5,473.5 356.5,473.5 357.5,472.5 358.5,472.5 359.5,471.5 360.5,471.5 361.5,470.5 362.5,470.5 363.5,469.5 364.5,469.5 365.5,468.5 366.5,468.5 367.5,467.5 368.5,467.5 369.5,466.5 407.5,466.5 408.5,467.5 438.5,467.5 439.5,468.5 467.5,468.5 468.5,467.5 497.5,467.5 498.5,466.5 547.5,466.5 548.5,467.5 566.5,467.5 567.5,468.5 601.5,468.5 602.5,467.5 661.5,467.5 662.5,466.5 688.5,466.5 689.5,465.5 697.5,465.5 698.5,466.5 700.5,466.5 701.5,467.5 704.5,467.5 705.5,468.5 710.5,468.5 711.5,467.5 727.5,467.5 728.5,466.5 748.5,466.5 749.5,465.5 792.5,465.5 793.5,464.5 807.5,464.5 808.5,465.5 813.5,465.5 814.5,466.5 817.5,466.5 818.5,467.5 887.5,467.5 888.5,466.5 900.5,466.5 901.5,467.5 951.5,467.5 952.5,466.5 963.5,466.5 964.5,467.5 982.5,467.5 983.5,466.5 1003.5,466.5" stroke="#e07820"/>
<polyline points="20.5,457.5 159.5,457.5 160.5,456.5 183.5,456.5 184.5,457.5 217.5,457.5 218.5,456.5 257.5,456.5 258.5,457.5 276.5,457.5 277.5,458.5 278.5,458.5 279.5,459.5 280.5,459.5 281.5,460.5 282.5,461.5 283.5,461.5 284.5,462.5 285.5,463.5 286.5,463.5 287.5,464.5 288.5,464.5 289.5,465.5 311.5,465.5 312.5,464.5 319.5,464.5 320.5,465.5 321.5,466.5 322.5,466.5 323.5,467.5 324.5,467.5 325.5,468.5 326.5,468.5 327.5,469.5 328.5,469.5 329.5,470.5 330.5,470.5 331.5,471.5 332.5,471.5 333.5,472.5 357.5,472.5 358.5,471.5 359.5,470.5 360.5,469.5 361.5,468.5 362.5,468.5 363.5,467.5 364.5,466.5 367.5,466.5 368.5,467.5 422.5,467.5 423.5,466.5 445.5,466.5 446.5,467.5 461.5,467.5 462.5,466.5 491.5,466.5 492.5,465.5 541.5,465.5 542.5,466.5 560.5,466.5 561.5,467.5 562.5,468.5 586.5,468.5 587.5,466.5 595.5,466.5 596.5,465.5 630.5,465.5 631.5,466.5 655.5,466.5 656.5,465.5 662.5,465.5 663.5,466.5 682.5,466.5 683.5,465.5 694.5,465.5 695.5,466.5 698.5,466.5 699.5,467.5 721.5,467.5 722.5,466.5 742.5,466.5 743.5,465.5 786.5,465.5 787.5,464.5 801.5,464.5 802.5,465.5 807.5,465.5 808.5,466.5 815.5,466.5 816.5,467.5 850.5,467.5 851.5,465.5 881.5,465.5 882.5,464.5 895.5,464.5 896.5,465.5 957.5,465.5 958.5,466.5 1003.5,466.5" stroke="#a08000"/>
<polyline points="20.5,459.5 37.5,459.5 38.5,460.5 276.5,460.5 277.5,461.5 278.5,461.5 279.5,462.5 280.5,462.5 281.5,463.5 282.5,463.5 283.5,464.5 284.5,464.5 285.5,465.5 286.5,465.5 287.5,466.5 288.5,466.5 289.5,467.5 298.5,467.5 299.5,466.5 319.5,466.5 320.5,467.5 321.5,468.5 322.5,468.5 323.5,469.5 324.5,470.5 325.5,470.5 326.5,471.5 327.5,471.5 328.5,472.5 329.5,473.5 330.5,473.5 331.5,474.5 357.5,474.5 358.5,473.5 360.5,473.5 361.5,472.5 363.5,472.5 364.5,471.5 365.5,471.5 366.5,470.5 368.5,470.5 369.5,469.5 456.5,469.5 457.5,470.5 472.5,470.5 473.5,469.5 502.5,469.5 503.5,468.5 516.5,468.5 517.5,467.5 552.5,467.5 553.5,468.5 570.5,468.5 571.5,470.5 572.5,471.5 605.5,471.5 606.5,468.5 659.5,468.5 660.5,469.5 666.5,469.5 667.5,468.5 693.5,468.5 694.5,467.5 702.5,467.5 703.5,468.5 705.5,468.5 706.5,469.5 709.5,469.5 710.5,470.5 753.5,470.5 754.5,469.5 787.5,469.5 788.5,468.5 818.5,468.5 819.5,469.5 898.5,469.5 899.5,468.5 926.5,468.5 927.5,467.5 950.5,467.5 951.5,468.5 968.5,468.5 969.5,469.5 978.5,469.5 979.5,470.5 1003.5,470.5" stroke="#9aaa10"/>
<polyline points="20.5,465.5 119.5,465.5 120.5,464.5 146.5,464.5 147.5,463.5 156.5,463.5 157.5,464.5 251.5,464.5 252.5,463.5 273.5,463.5 274.5,464.5 275.5,464.5 276.5,465.5 277.5,465.5 278.5,466.5 279.5,466.5 280.5,467.5 281.5,466.5 282.5,467.5 283.5,467.5 284.5,468.5 285.5,468.5 286.5,469.5 287.5,469.5 288.5,470.5 299.5,470.5 300.5,472.5 302.5,472.5 303.5,471.5 318.5,471.5 319.5,472.5 320.5,472.5 321.5,473.5 322.5,474.5 323.5,474.5 324.5,475.5 326.5,475.5 327.5,476.5 328.5,477.5 329.5,478.5 358.5,478.5 359.5,477.5 361.5,477.5 362.5,476.5 365.5,476.5 366.5,475.5 379.5,475.5 380.5,477.5 436.5,477.5 437.5,476.5 440.5,476.5 441.5,477.5 456.5,477.5 457.5,476.5 486.5,476.5 487.5,475.5 529.5,475.5 530.5,474.5 536.5,474.5 537.5,475.5 545.5,475.5 546.5,476.5 555.5,476.5 556.5,477.5 557.5,477.5 558.5,476.5 590.5,476.5 591.5,475.5 616.5,475.5 617.5,476.5 643.5,476.5 644.5,475.5 650.5,475.5 651.5,474.5 667.5,474.5 668.5,475.5 676.5,475.5 677.5,474.5 686.5,474.5 687.5,475.5 689.5,475.5 690.5,476.5 693.5,476.5 694.5,477.5 708.5,477.5 709.5,476.5 716.5,476.5 717.5,475.5 735.5,475.5 736.5,476.5 737.5,476.5 738.5,475.5 781.5,475.5 782.5,474.5 790.5,474.5 791.5,476.5 802.5,476.5 803.5,477.5 837.5,477.5 838.5,476.5 866.5,476.5 867.5,475.5 906.5,475.5 907.5,474.5 952.5,474.5 953.5,475.5 966.5,475.5 967.5,476.5 1003.5,476.5" stroke="#101050"/>
<polyline points="20.5,460.5 117.5,460.5 118.5,459.5 128.5,459.5 129.5,460.5 258.5,460.5 259.5,459.5 275.5,459.5 276.5,460.5 277.5,460.5 278.5,462.5 280.5,462.5 281.5,463.5 282.5,464.5 284.5,464.5 285.5,465.5 286.5,466.5 288.5,466.5 289.5,467.5 299.5,467.5 300.5,466.5 323.5,466.5 324.5,468.5 325.5,469.5 326.5,471.5 327.5,472.5 328.5,474.5 329.5,475.5 330.5,476.5 331.5,478.5 332.5,479.5 333.5,481.5 334.5,482.5 359.5,482.5 360.5,481.5 362.5,481.5 363.5,480.5 549.5,480.5 550.5,479.5 587.5,479.5 588.5,480.5 640.5,480.5 641.5,479.5 670.5,479.5 671.5,480.5 688.5,480.5 689.5,479.5 701.5,479.5 702.5,480.5 793.5,480.5 794.5,479.5 807.5,479.5 808.5,480.5 811.5,480.5 812.5,481.5 858.5,481.5 859.5,480.5 870.5,480.5 871.5,479.5 964.5,479.5 965.5,478.5 967.5,478.5 968.5,479.5 989.5,479.5 990.5,480.5 1003.5,480.5" stroke="#ff6030"/>
<polyline points="20.5,456.5 67.5,456.5 68.5,457.5 82.5,457.5 83.5,458.5 205.5,458.5 206.5,457.5 278.5,457.5 279.5,458.5 280.5,458.5 281.5,459.5 282.5,459.5 283.5,460.5 284.5,460.5 285.5,461.5 286.5,461.5 287.5,462.5 288.5,462.5 289.5,463.5 290.5,463.5 291.5,464.5 321.5,464.5 322.5,466.5 323.5,467.5 324.5,468.5 325.5,469.5 326.5,470.5 327.5,471.5 328.5,472.5 356.5,472.5 357.5,471.5 358.5,471.5 359.5,470.5 361.5,470.5 362.5,469.5 363.5,469.5 364.5,468.5 365.5,468.5 366.5,467.5 367.5,467.5 368.5,466.5 379.5,466.5 380.5,465.5 426.5,465.5 427.5,466.5 453.5,466.5 454.5,467.5 463.5,467.5 464.5,466.5 469.5,466.5 470.5,465.5 499.5,465.5 500.5,464.5 505.5,464.5 506.5,465.5 549.5,465.5 550.5,466.5 568.5,466.5 569.5,467.5 602.5,467.5 603.5,466.5 663.5,466.5 664.5,465.5 683.5,465.5 684.5,466.5 690.5,466.5 691.5,465.5 699.5,465.5 700.5,466.5 702.5,466.5 703.5,467.5 706.5,467.5 707.5,468.5 725.5,468.5 726.5,467.5 729.5,467.5 730.5,466.5 750.5,466.5 751.5,465.5 794.5,465.5 795.5,464.5 809.5,464.5 810.5,465.5 811.5,464.5 815.5,464.5 816.5,465.5 854.5,465.5 855.5,466.5 870.5,466.5 871.5,465.5 900.5,465.5 901.5,464.5 941.5,464.5 942.5,466.5 957.5,466.5 958.5,465.5 965.5,465.5 966.5,466.5 975.5,466.5 976.5,465.5 1003.5,465.5" stroke="#808000"/>
<polyline points="20.5,470.5 102.5,470.5 103.5,469.5 116.5,469.5 117.5,468.5 130.5,468.5 131.5,467.5 145.5,467.5 146.5,466.5 206.5,466.5 207.5,467.5 228.5,467.5 229.5,466.5 265.5,466.5 266.5,467.5 271.5,467.5 272.5,468.5 274.5,468.5 275.5,469.5 276.5,469.5 277.5,470.5 278.5,470.5 279.5,471.5 281.5,471.5 282.5,472.5 283.5,472.5 284.5,473.5 286.5,473.5 287.5,474.5 288.5,474.5 289.5,475.5 290.5,475.5 291.5,476.5 299.5,476.5 300.5,475.5 321.5,475.5 322.5,476.5 324.5,476.5 325.5,477.5 326.5,477.5 327.5,478.5 328.5,478.5 329.5,479.5 333.5,479.5 334.5,480.5 358.5,480.5 359.5,479.5 362.5,479.5 363.5,478.5 366.5,478.5 367.5,477.5 373.5,477.5 374.5,475.5 421.5,475.5 422.5,476.5 441.5,476.5 442.5,477.5 457.5,477.5 458.5,476.5 487.5,476.5 488.5,475.5 537.5,475.5 538.5,476.5 552.5,476.5 553.5,477.5 556.5,477.5 557.5,478.5 570.5,478.5 571.5,477.5 586.5,477.5 587.5,478.5 591.5,478.5 592.5,477.5 609.5,477.5 610.5,476.5 625.5,476.5 626.5,475.5 651.5,475.5 652.5,474.5 656.5,474.5 657.5,475.5 677.5,475.5 678.5,474.5 687.5,474.5 688.5,475.5 690.5,475.5 691.5,476.5 694.5,476.5 695.5,477.5 717.5,477.5 718.5,476.5 738.5,476.5 739.5,475.5 750.5,475.5 751.5,474.5 803.5,474.5 804.5,475.5 805.5,475.5 806.5,476.5 866.5,476.5 867.5,475.5 872.5,475.5 873.5,476.5 895.5,476.5 896.5,475.5 948.5,475.5 949.5,476.5 953.5,476.5 954.5,477.5 983.5,477.5 984.5,475.5 1003.5,475.5" stroke="#a09040"/>
<polyline points="20.5,455.5 277.5,455.5 278.5,456.5 279.5,456.5 280.5,457.5 281.5,457.5 282.5,458.5 283.5,458.5 284.5,459.5 285.5,459.5 286.5,460.5 287.5,460.5 288.5,461.5 289.5,461.5 290.5,462.5 321.5,462.5 322.5,463.5 323.5,464.5 324.5,465.5 325.5,466.5 326.5,466.5 327.5,467.5 328.5,468.5 329.5,469.5 330.5,469.5 331.5,470.5 358.5,470.5 359.5,469.5 360.5,469.5 361.5,468.5 362.5,467.5 363.5,466.5 364.5,465.5 365.5,465.5 366.5,464.5 367.5,463.5 446.5,463.5 447.5,464.5 462.5,464.5 463.5,463.5 492.5,463.5 493.5,462.5 542.5,462.5 543.5,463.5 561.5,463.5 562.5,464.5 596.5,464.5 597.5,463.5 656.5,463.5 657.5,462.5 683.5,462.5 684.5,461.5 692.5,461.5 693.5,462.5 695.5,462.5 696.5,463.5 699.5,463.5 700.5,464.5 722.5,464.5 723.5,463.5 743.5,463.5 744.5,462.5 808.5,462.5 809.5,463.5 891.5,463.5 892.5,462.5 958.5,462.5 959.5,463.5 1003.5,463.5" stroke="#000000"/>
<polyline points="20.5,454.5 243.5,454.5 244.5,453.5 256.5,453.5 257.5,452.5 276.5,452.5 277.5,454.5 278.5,456.5 279.5,458.5 280.5,460.5 281.5,462.5 282.5,465.5 283.5,467.5 284.5,469.5 285.5,471.5 286.5,474.5 287.5,476.5 289.5,476.5 290.5,477.5 292.5,477.5" stroke="#c8b0e8"/>
<polyline points="20.5,485.5 275.5,485.5 276.5,486.5 277.5,487.5 278.5,488.5 279.5,489.5 280.5,490.5 281.5,491.5 282.5,492.5 283.5,493.5 284.5,494.5 314.5,494.5 315.5,495.5 329.5,495.5 330.5,496.5 331.5,496.5 332.5,497.5 333.5,498.5 1003.5,498.5" stroke="#40b0f0"/>
<polyline points="333.5,497.5 395.5,497.5" stroke="#40b0f0"/>
<polyline points="20.5,478.5 1003.5,478.5" stroke="#000"/>
<polyline points="20.5,484.5 1003.5,484.5" stroke="#000"/>
<polyline points="20.5,499.5 1003.5,499.5" stroke="#000"/>
<polyline points="14.5,582.5 105.5,582.5 106.5,583.5 194.5,583.5 195.5,582.5 259.5,582.5 260.5,581.5 262.5,581.5 263.5,580.5 264.5,580.5 265.5,579.5 266.5,579.5 267.5,578.5 268.5,578.5 269.5,577.5 270.5,577.5 271.5,576.5 273.5,576.5 274.5,575.5 276.5,575.5 277.5,574.5 279.5,574.5 280.5,573.5 310.5,573.5 311.5,574.5 313.5,574.5 314.5,575.5 315.5,575.5 316.5,576.5 345.5,576.5 346.5,577.5 347.5,577.5 348.5,578.5 349.5,578.5 350.5,579.5 351.5,579.5 352.5,580.5 466.5,580.5 467.5,581.5 514.5,581.5 515.5,582.5 536.5,582.5 537.5,581.5 681.5,581.5 682.5,580.5 693.5,580.5 694.5,579.5 697.5,579.5 698.5,578.5 702.5,578.5 703.5,577.5 755.5,577.5 756.5,576.5 760.5,576.5 761.5,575.5 763.5,575.5 764.5,574.5 791.5,574.5 792.5,575.5 795.5,575.5 796.5,576.5 798.5,576.5 799.5,577.5 802.5,577.5 803.5,578.5 806.5,578.5 807.5,579.5 810.5,579.5 811.5,580.5 839.5,580.5 840.5,581.5 849.5,581.5 850.5,582.5 851.5,582.5 852.5,581.5 865.5,581.5 866.5,580.5 926.5,580.5 927.5,581.5 1007.5,581.5" stroke="#50f010"/>
<polyline points="14.5,583.5 108.5,583.5 109.5,584.5 111.5,584.5 112.5,585.5 132.5,585.5 133.5,586.5 168.5,586.5 169.5,585.5 238.5,585.5 239.5,586.5 257.5,586.5 258.5,585.5 261.5,585.5 262.5,584.5 263.5,584.5 264.5,583.5 265.5,583.5 266.5,582.5 267.5,581.5 268.5,581.5 269.5,580.5 271.5,580.5 272.5,579.5 275.5,579.5 276.5,578.5 279.5,578.5 280.5,577.5 312.5,577.5 313.5,578.5 315.5,578.5 316.5,579.5 326.5,579.5 327.5,580.5 338.5,580.5 339.5,581.5 346.5,581.5 347.5,582.5 348.5,582.5 349.5,583.5 351.5,583.5 352.5,584.5 360.5,584.5 361.5,583.5 418.5,583.5 419.5,584.5 489.5,584.5 490.5,583.5 512.5,583.5 513.5,584.5 517.5,584.5 518.5,585.5 519.5,584.5 557.5,584.5 558.5,583.5 630.5,583.5 631.5,584.5 655.5,584.5 656.5,583.5 693.5,583.5 694.5,582.5 697.5,582.5 698.5,581.5 705.5,581.5 706.5,580.5 715.5,580.5 716.5,581.5 736.5,581.5 737.5,580.5 759.5,580.5 760.5,579.5 763.5,579.5 764.5,578.5 767.5,578.5 768.5,577.5 775.5,577.5 776.5,576.5 792.5,576.5 793.5,577.5 797.5,577.5 798.5,578.5 801.5,578.5 802.5,579.5 806.5,579.5 807.5,580.5 821.5,580.5 822.5,581.5 838.5,581.5 839.5,582.5 845.5,582.5 846.5,583.5 862.5,583.5 863.5,582.5 866.5,582.5 867.5,581.5 889.5,581.5 890.5,580.5 898.5,580.5 899.5,581.5 919.5,581.5 920.5,582.5 961.5,582.5 962.5,583.5 1007.5,583.5" stroke="#ff6030"/>
<polyline points="14.5,578.5 105.5,578.5 106.5,579.5 194.5,579.5 195.5,580.5 241.5,580.5 242.5,579.5 261.5,579.5 262.5,578.5 263.5,578.5 264.5,577.5 265.5,577.5 266.5,576.5 267.5,576.5 268.5,575.5 269.5,575.5 270.5,574.5 271.5,574.5 272.5,573.5 274.5,573.5 275.5,572.5 276.5,572.5 277.5,571.5 278.5,571.5 279.5,570.5 280.5,570.5 281.5,569.5 311.5,569.5 312.5,570.5 313.5,570.5 314.5,571.5 315.5,571.5 316.5,572.5 340.5,572.5 341.5,573.5 345.5,573.5 346.5,574.5 347.5,574.5 348.5,575.5 349.5,576.5 350.5,576.5 351.5,577.5 353.5,577.5 354.5,578.5 692.5,578.5 693.5,577.5 696.5,577.5 697.5,576.5 699.5,576.5 700.5,575.5 705.5,575.5 706.5,574.5 755.5,574.5 756.5,573.5 759.5,573.5 760.5,572.5 762.5,572.5 763.5,571.5 792.5,571.5 793.5,572.5 795.5,572.5 796.5,573.5 798.5,573.5 799.5,574.5 800.5,574.5 801.5,575.5 803.5,575.5 804.5,576.5 806.5,576.5 807.5,577.5 809.5,577.5 810.5,578.5 872.5,578.5 873.5,579.5 1007.5,579.5" stroke="#e080a0"/>
<polyline points="14.5,583.5 52.5,583.5 53.5,584.5 107.5,584.5 108.5,585.5 257.5,585.5 258.5,584.5 261.5,584.5 262.5,583.5 263.5,583.5 264.5,582.5 265.5,581.5 266.5,581.5 267.5,580.5 268.5,580.5 269.5,579.5 271.5,579.5 272.5,578.5 275.5,578.5 276.5,577.5 279.5,577.5 280.5,576.5 301.5,576.5 302.5,577.5 312.5,577.5 313.5,578.5 317.5,578.5 318.5,579.5 328.5,579.5 329.5,580.5 339.5,580.5 340.5,581.5 346.5,581.5 347.5,582.5 349.5,582.5 350.5,583.5 366.5,583.5 367.5,584.5 418.5,584.5 419.5,585.5 516.5,585.5 517.5,586.5 520.5,586.5 521.5,585.5 567.5,585.5 568.5,584.5 636.5,584.5 637.5,585.5 676.5,585.5 677.5,584.5 691.5,584.5 692.5,583.5 695.5,583.5 696.5,582.5 699.5,582.5 700.5,581.5 714.5,581.5 715.5,580.5 754.5,580.5 755.5,581.5 756.5,581.5 757.5,580.5 762.5,580.5 763.5,579.5 765.5,579.5 766.5,578.5 775.5,578.5 776.5,577.5 789.5,577.5 790.5,576.5 791.5,577.5 795.5,577.5 796.5,578.5 800.5,578.5 801.5,579.5 805.5,579.5 806.5,580.5 813.5,580.5 814.5,581.5 822.5,581.5 823.5,582.5 838.5,582.5 839.5,583.5 844.5,583.5 845.5,584.5 863.5,584.5 864.5,583.5 866.5,583.5 867.5,582.5 888.5,582.5 889.5,581.5 912.5,581.5 913.5,582.5 1004.5,582.5 1005.5,583.5 1007.5,583.5" stroke="#101050"/>
<polyline points="14.5,584.5 76.5,584.5 77.5,585.5 104.5,585.5 105.5,586.5 112.5,586.5 113.5,587.5 165.5,587.5 166.5,586.5 191.5,586.5 192.5,587.5 258.5,587.5 259.5,586.5 261.5,586.5 262.5,585.5 263.5,585.5 264.5,584.5 265.5,583.5 266.5,583.5 267.5,582.5 268.5,582.5 269.5,581.5 271.5,581.5 272.5,580.5 276.5,580.5 277.5,579.5 280.5,579.5 281.5,578.5 313.5,578.5 314.5,579.5 319.5,579.5 320.5,580.5 329.5,580.5 330.5,581.5 340.5,581.5 341.5,582.5 345.5,582.5 346.5,583.5 347.5,583.5 348.5,584.5 350.5,584.5 351.5,585.5 364.5,585.5 365.5,584.5 384.5,584.5 385.5,585.5 397.5,585.5 398.5,584.5 512.5,584.5 513.5,585.5 516.5,585.5 517.5,586.5 521.5,586.5 522.5,585.5 599.5,585.5 600.5,586.5 612.5,586.5 613.5,585.5 692.5,585.5 693.5,584.5 697.5,584.5 698.5,583.5 705.5,583.5 706.5,582.5 760.5,582.5 761.5,581.5 764.5,581.5 765.5,580.5 768.5,580.5 769.5,579.5 794.5,579.5 795.5,580.5 800.5,580.5 801.5,581.5 805.5,581.5 806.5,582.5 818.5,582.5 819.5,583.5 836.5,583.5 837.5,584.5 842.5,584.5 843.5,585.5 848.5,585.5 849.5,586.5 856.5,586.5 857.5,585.5 863.5,585.5 864.5,584.5 866.5,584.5 867.5,583.5 874.5,583.5 875.5,582.5 909.5,582.5 910.5,583.5 925.5,583.5 926.5,584.5 1007.5,584.5" stroke="#101050"/>
<polyline points="14.5,585.5 100.5,585.5 101.5,586.5 107.5,586.5 108.5,587.5 114.5,587.5 115.5,588.5 149.5,588.5 150.5,587.5 188.5,587.5 189.5,588.5 256.5,588.5 257.5,587.5 260.5,587.5 261.5,586.5 262.5,586.5 263.5,585.5 264.5,585.5 265.5,584.5 266.5,583.5 267.5,583.5 268.5,582.5 269.5,582.5 270.5,581.5 274.5,581.5 275.5,580.5 279.5,580.5 280.5,579.5 311.5,579.5 312.5,580.5 315.5,580.5 316.5,581.5 324.5,581.5 325.5,582.5 334.5,582.5 335.5,583.5 344.5,583.5 345.5,584.5 348.5,584.5 349.5,585.5 351.5,585.5 352.5,586.5 353.5,586.5 354.5,585.5 362.5,585.5 363.5,584.5 388.5,584.5 389.5,585.5 403.5,585.5 404.5,586.5 491.5,586.5 492.5,585.5 513.5,585.5 514.5,586.5 517.5,586.5 518.5,587.5 519.5,587.5 520.5,586.5 691.5,586.5 692.5,585.5 695.5,585.5 696.5,584.5 701.5,584.5 702.5,583.5 760.5,583.5 761.5,582.5 763.5,582.5 764.5,581.5 768.5,581.5 769.5,580.5 785.5,580.5 786.5,579.5 794.5,579.5 795.5,580.5 800.5,580.5 801.5,581.5 807.5,581.5 808.5,582.5 825.5,582.5 826.5,583.5 837.5,583.5 838.5,584.5 843.5,584.5 844.5,585.5 848.5,585.5 849.5,586.5 856.5,586.5 857.5,585.5 863.5,585.5 864.5,584.5 866.5,584.5 867.5,583.5 883.5,583.5 884.5,582.5 901.5,582.5 902.5,583.5 917.5,583.5 918.5,584.5 1007.5,584.5" stroke="#60b0f0"/>
<polyline points="14.5,584.5 106.5,584.5 107.5,585.5 113.5,585.5 114.5,586.5 253.5,586.5 254.5,587.5 259.5,587.5 260.5,586.5 261.5,586.5 262.5,585.5 263.5,585.5 264.5,584.5 265.5,584.5 266.5,583.5 267.5,582.5 269.5,582.5 270.5,581.5 272.5,581.5 273.5,580.5 277.5,580.5 278.5,579.5 281.5,579.5 282.5,578.5 310.5,578.5 311.5,579.5 313.5,579.5 314.5,580.5 320.5,580.5 321.5,581.5 329.5,581.5 330.5,582.5 340.5,582.5 341.5,583.5 346.5,583.5 347.5,584.5 350.5,584.5 351.5,585.5 380.5,585.5 381.5,584.5 409.5,584.5 410.5,585.5 512.5,585.5 513.5,586.5 516.5,586.5 517.5,587.5 520.5,587.5 521.5,586.5 666.5,586.5 667.5,585.5 693.5,585.5 694.5,584.5 697.5,584.5 698.5,583.5 699.5,583.5 700.5,582.5 758.5,582.5 759.5,581.5 762.5,581.5 763.5,580.5 764.5,580.5 765.5,579.5 768.5,579.5 769.5,578.5 787.5,578.5 788.5,577.5 790.5,577.5 791.5,578.5 795.5,578.5 796.5,579.5 801.5,579.5 802.5,580.5 807.5,580.5 808.5,581.5 824.5,581.5 825.5,582.5 838.5,582.5 839.5,583.5 843.5,583.5 844.5,584.5 848.5,584.5 849.5,585.5 853.5,585.5 854.5,584.5 863.5,584.5 864.5,583.5 866.5,583.5 867.5,582.5 868.5,582.5 869.5,583.5 871.5,583.5 872.5,582.5 906.5,582.5 907.5,583.5 909.5,583.5 910.5,582.5 918.5,582.5 919.5,583.5 1007.5,583.5" stroke="#ff6030"/>
<polyline points="14.5,585.5 87.5,585.5 88.5,586.5 104.5,586.5 105.5,587.5 110.5,587.5 111.5,588.5 158.5,588.5 159.5,589.5 258.5,589.5 259.5,588.5 261.5,588.5 262.5,587.5 263.5,586.5 264.5,586.5 265.5,585.5 266.5,584.5 267.5,584.5 268.5,583.5 269.5,583.5 270.5,582.5 276.5,582.5 277.5,581.5 288.5,581.5 289.5,580.5 312.5,580.5 313.5,581.5 318.5,581.5 319.5,582.5 325.5,582.5 326.5,583.5 333.5,583.5 334.5,584.5 342.5,584.5 343.5,585.5 348.5,585.5 349.5,586.5 373.5,586.5 374.5,585.5 409.5,585.5 410.5,586.5 514.5,586.5 515.5,587.5 548.5,587.5 549.5,586.5 691.5,586.5 692.5,585.5 695.5,585.5 696.5,584.5 704.5,584.5 705.5,583.5 762.5,583.5 763.5,582.5 765.5,582.5 766.5,581.5 769.5,581.5 770.5,580.5 789.5,580.5 790.5,579.5 791.5,580.5 797.5,580.5 798.5,581.5 805.5,581.5 806.5,582.5 821.5,582.5 822.5,583.5 836.5,583.5 837.5,584.5 840.5,584.5 841.5,585.5 845.5,585.5 846.5,586.5 849.5,586.5 850.5,587.5 851.5,587.5 852.5,586.5 862.5,586.5 863.5,585.5 864.5,585.5 865.5,584.5 867.5,584.5 868.5,583.5 890.5,583.5 891.5,582.5 898.5,582.5 899.5,583.5 912.5,583.5 913.5,584.5 936.5,584.5 937.5,585.5 1007.5,585.5" stroke="#e0702a"/>
<polyline points="14.5,578.5 150.5,578.5 151.5,579.5 263.5,579.5 264.5,578.5 265.5,578.5 266.5,577.5 267.5,577.5 268.5,576.5 269.5,576.5 270.5,575.5 271.5,575.5 272.5,574.5 273.5,574.5 274.5,573.5 275.5,573.5 276.5,572.5 277.5,572.5 278.5,571.5 279.5,571.5 280.5,570.5 281.5,570.5 282.5,569.5 311.5,569.5 312.5,570.5 313.5,570.5 314.5,571.5 319.5,571.5 320.5,572.5 346.5,572.5 347.5,573.5 348.5,574.5 349.5,574.5 350.5,575.5 351.5,576.5 352.5,576.5 353.5,577.5 359.5,577.5 360.5,578.5 430.5,578.5 431.5,577.5 506.5,577.5 507.5,578.5 536.5,578.5 537.5,577.5 644.5,577.5 645.5,578.5 692.5,578.5 693.5,577.5 695.5,577.5 696.5,576.5 698.5,576.5 699.5,575.5 703.5,575.5 704.5,574.5 708.5,574.5 709.5,573.5 757.5,573.5 758.5,572.5 761.5,572.5 762.5,571.5 764.5,571.5 765.5,570.5 790.5,570.5 791.5,571.5 793.5,571.5 794.5,572.5 795.5,572.5 796.5,573.5 798.5,573.5 799.5,574.5 801.5,574.5 802.5,575.5 803.5,575.5 804.5,576.5 806.5,576.5 807.5,577.5 808.5,577.5 809.5,578.5 850.5,578.5 851.5,577.5 904.5,577.5 905.5,578.5 1007.5,578.5" stroke="#e080a0"/>
<polyline points="14.5,579.5 90.5,579.5 91.5,578.5 263.5,578.5 264.5,577.5 265.5,577.5 266.5,576.5 267.5,576.5 268.5,575.5 269.5,575.5 270.5,574.5 271.5,574.5 272.5,573.5 273.5,573.5 274.5,572.5 275.5,572.5 276.5,571.5 277.5,571.5 278.5,570.5 279.5,570.5 280.5,569.5 281.5,569.5 282.5,568.5 310.5,568.5 311.5,569.5 312.5,569.5 313.5,570.5 314.5,570.5 315.5,571.5 316.5,572.5 345.5,572.5 346.5,573.5 347.5,574.5 348.5,574.5 349.5,575.5 350.5,576.5 351.5,576.5 352.5,577.5 360.5,577.5 361.5,578.5 389.5,578.5 390.5,579.5 521.5,579.5 522.5,578.5 591.5,578.5 592.5,579.5 690.5,579.5 691.5,578.5 693.5,578.5 694.5,577.5 697.5,577.5 698.5,576.5 700.5,576.5 701.5,575.5 706.5,575.5 707.5,574.5 756.5,574.5 757.5,573.5 759.5,573.5 760.5,572.5 763.5,572.5 764.5,571.5 792.5,571.5 793.5,572.5 794.5,572.5 795.5,573.5 797.5,573.5 798.5,574.5 800.5,574.5 801.5,575.5 802.5,575.5 803.5,576.5 805.5,576.5 806.5,577.5 808.5,577.5 809.5,578.5 944.5,578.5 945.5,577.5 1007.5,577.5" stroke="#e04030"/>
<polyline points="14.5,583.5 71.5,583.5 72.5,584.5 105.5,584.5 106.5,585.5 113.5,585.5 114.5,586.5 162.5,586.5 163.5,585.5 258.5,585.5 259.5,584.5 261.5,584.5 262.5,583.5 263.5,583.5 264.5,582.5 265.5,582.5 266.5,581.5 267.5,581.5 268.5,580.5 269.5,580.5 270.5,579.5 272.5,579.5 273.5,578.5 276.5,578.5 277.5,577.5 280.5,577.5 281.5,576.5 310.5,576.5 311.5,577.5 314.5,577.5 315.5,578.5 322.5,578.5 323.5,579.5 332.5,579.5 333.5,580.5 344.5,580.5 345.5,581.5 347.5,581.5 348.5,582.5 350.5,582.5 351.5,583.5 397.5,583.5 398.5,584.5 473.5,584.5 474.5,585.5 515.5,585.5 516.5,586.5 523.5,586.5 524.5,585.5 691.5,585.5 692.5,584.5 695.5,584.5 696.5,583.5 699.5,583.5 700.5,582.5 756.5,582.5 757.5,581.5 762.5,581.5 763.5,580.5 765.5,580.5 766.5,579.5 774.5,579.5 775.5,578.5 789.5,578.5 790.5,577.5 791.5,578.5 795.5,578.5 796.5,579.5 800.5,579.5 801.5,580.5 806.5,580.5 807.5,581.5 818.5,581.5 819.5,582.5 837.5,582.5 838.5,583.5 843.5,583.5 844.5,584.5 847.5,584.5 848.5,585.5 862.5,585.5 863.5,584.5 865.5,584.5 866.5,583.5 881.5,583.5 882.5,582.5 902.5,582.5 903.5,583.5 921.5,583.5 922.5,584.5 1007.5,584.5" stroke="#c00040"/>
<polyline points="14.5,582.5 101.5,582.5 102.5,583.5 112.5,583.5 113.5,584.5 261.5,584.5 262.5,583.5 263.5,583.5 264.5,582.5 265.5,582.5 266.5,581.5 267.5,581.5 268.5,580.5 269.5,580.5 270.5,579.5 271.5,579.5 272.5,578.5 275.5,578.5 276.5,577.5 278.5,577.5 279.5,576.5 281.5,576.5 282.5,575.5 310.5,575.5 311.5,576.5 313.5,576.5 314.5,577.5 317.5,577.5 318.5,578.5 331.5,578.5 332.5,579.5 345.5,579.5 346.5,580.5 347.5,580.5 348.5,581.5 349.5,581.5 350.5,582.5 517.5,582.5 518.5,583.5 519.5,582.5 526.5,582.5 527.5,583.5 676.5,583.5 677.5,582.5 693.5,582.5 694.5,581.5 697.5,581.5 698.5,580.5 702.5,580.5 703.5,579.5 760.5,579.5 761.5,578.5 763.5,578.5 764.5,577.5 768.5,577.5 769.5,576.5 779.5,576.5 780.5,575.5 791.5,575.5 792.5,576.5 794.5,576.5 795.5,577.5 798.5,577.5 799.5,578.5 802.5,578.5 803.5,579.5 807.5,579.5 808.5,580.5 822.5,580.5 823.5,581.5 840.5,581.5 841.5,582.5 847.5,582.5 848.5,583.5 856.5,583.5 857.5,582.5 865.5,582.5 866.5,581.5 906.5,581.5 907.5,582.5 925.5,582.5 926.5,581.5 931.5,581.5 932.5,582.5 1007.5,582.5" stroke="#9aaa10"/>
<polyline points="14.5,579.5 101.5,579.5 102.5,580.5 136.5,580.5 137.5,581.5 258.5,581.5 259.5,580.5 263.5,580.5 264.5,579.5 265.5,579.5 266.5,578.5 267.5,578.5 268.5,577.5 269.5,577.5 270.5,576.5 271.5,576.5 272.5,575.5 273.5,575.5 274.5,574.5 276.5,574.5 277.5,573.5 278.5,573.5 279.5,572.5 280.5,572.5 281.5,571.5 311.5,571.5 312.5,572.5 313.5,572.5 314.5,573.5 315.5,573.5 316.5,574.5 317.5,573.5 341.5,573.5 342.5,574.5 346.5,574.5 347.5,575.5 348.5,575.5 349.5,576.5 350.5,577.5 351.5,577.5 352.5,578.5 363.5,578.5 364.5,579.5 512.5,579.5 513.5,580.5 524.5,580.5 525.5,579.5 555.5,579.5 556.5,578.5 633.5,578.5 634.5,579.5 688.5,579.5 689.5,578.5 691.5,578.5 692.5,577.5 695.5,577.5 696.5,576.5 699.5,576.5 700.5,575.5 704.5,575.5 705.5,574.5 755.5,574.5 756.5,573.5 759.5,573.5 760.5,572.5 762.5,572.5 763.5,571.5 764.5,572.5 765.5,571.5 791.5,571.5 792.5,572.5 794.5,572.5 795.5,573.5 796.5,573.5 797.5,574.5 799.5,574.5 800.5,575.5 802.5,575.5 803.5,576.5 805.5,576.5 806.5,577.5 807.5,576.5 808.5,577.5 826.5,577.5 827.5,578.5 882.5,578.5 883.5,577.5 901.5,577.5 902.5,578.5 931.5,578.5 932.5,579.5 1007.5,579.5" stroke="#808000"/>
<polyline points="14.5,584.5 95.5,584.5 96.5,583.5 100.5,583.5 101.5,584.5 109.5,584.5 110.5,585.5 150.5,585.5 151.5,584.5 261.5,584.5 262.5,583.5 263.5,582.5 264.5,582.5 265.5,581.5 266.5,581.5 267.5,580.5 268.5,580.5 269.5,579.5 270.5,579.5 271.5,578.5 274.5,578.5 275.5,577.5 278.5,577.5 279.5,576.5 312.5,576.5 313.5,577.5 316.5,577.5 317.5,578.5 327.5,578.5 328.5,579.5 339.5,579.5 340.5,580.5 346.5,580.5 347.5,581.5 349.5,581.5 350.5,582.5 396.5,582.5 397.5,583.5 415.5,583.5 416.5,584.5 516.5,584.5 517.5,585.5 521.5,585.5 522.5,584.5 534.5,584.5 535.5,583.5 586.5,583.5 587.5,584.5 635.5,584.5 636.5,583.5 691.5,583.5 692.5,582.5 695.5,582.5 696.5,581.5 699.5,581.5 700.5,580.5 756.5,580.5 757.5,579.5 761.5,579.5 762.5,578.5 765.5,578.5 766.5,577.5 776.5,577.5 777.5,576.5 791.5,576.5 792.5,577.5 796.5,577.5 797.5,578.5 801.5,578.5 802.5,579.5 806.5,579.5 807.5,580.5 808.5,580.5 809.5,581.5 826.5,581.5 827.5,582.5 838.5,582.5 839.5,583.5 841.5,583.5 842.5,584.5 847.5,584.5 848.5,585.5 858.5,585.5 859.5,584.5 864.5,584.5 865.5,583.5 867.5,583.5 868.5,582.5 925.5,582.5 926.5,583.5 996.5,583.5 997.5,584.5 1007.5,584.5" stroke="#900090"/>
<polyline points="14.5,579.5 104.5,579.5 105.5,580.5 205.5,580.5 206.5,581.5 258.5,581.5 259.5,580.5 263.5,580.5 264.5,579.5 265.5,579.5 266.5,578.5 267.5,577.5 268.5,577.5 269.5,576.5 271.5,576.5 272.5,574.5 274.5,574.5 275.5,573.5 276.5,573.5 277.5,572.5 279.5,572.5 280.5,571.5 281.5,571.5 282.5,570.5 310.5,570.5 311.5,571.5 312.5,571.5 313.5,572.5 315.5,572.5 316.5,573.5 333.5,573.5 334.5,574.5 346.5,574.5 347.5,575.5 348.5,576.5 349.5,576.5 350.5,577.5 351.5,577.5 352.5,578.5 384.5,578.5 385.5,579.5 584.5,579.5 585.5,580.5 630.5,580.5 631.5,579.5 690.5,579.5 691.5,578.5 694.5,578.5 695.5,577.5 697.5,577.5 698.5,576.5 702.5,576.5 703.5,575.5 709.5,575.5 710.5,574.5 758.5,574.5 759.5,573.5 762.5,573.5 763.5,572.5 768.5,572.5 769.5,571.5 791.5,571.5 792.5,572.5 794.5,572.5 795.5,573.5 797.5,573.5 798.5,574.5 800.5,574.5 801.5,575.5 803.5,575.5 804.5,576.5 806.5,576.5 807.5,577.5 809.5,577.5 810.5,578.5 842.5,578.5 843.5,579.5 863.5,579.5 864.5,578.5 887.5,578.5 888.5,579.5 1007.5,579.5" stroke="#c030a0"/>
<polyline points="14.5,588.5 104.5,588.5 105.5,589.5 108.5,589.5 109.5,590.5 114.5,590.5 115.5,591.5 191.5,591.5 192.5,590.5 225.5,590.5 226.5,589.5 259.5,589.5 260.5,588.5 261.5,588.5 262.5,587.5 263.5,586.5 264.5,586.5 265.5,585.5 266.5,584.5 267.5,584.5 268.5,583.5 269.5,583.5 270.5,582.5 279.5,582.5 280.5,581.5 311.5,581.5 312.5,582.5 318.5,582.5 319.5,583.5 324.5,583.5 325.5,584.5 331.5,584.5 332.5,585.5 338.5,585.5 339.5,586.5 342.5,586.5 343.5,587.5 348.5,587.5 349.5,588.5 358.5,588.5 359.5,587.5 401.5,587.5 402.5,588.5 428.5,588.5 429.5,587.5 512.5,587.5 513.5,588.5 515.5,588.5 516.5,589.5 523.5,589.5 524.5,588.5 687.5,588.5 688.5,587.5 693.5,587.5 694.5,586.5 699.5,586.5 700.5,585.5 762.5,585.5 763.5,584.5 766.5,584.5 767.5,583.5 769.5,583.5 770.5,582.5 786.5,582.5 787.5,581.5 791.5,581.5 792.5,582.5 803.5,582.5 804.5,583.5 820.5,583.5 821.5,584.5 835.5,584.5 836.5,585.5 839.5,585.5 840.5,586.5 843.5,586.5 844.5,587.5 846.5,587.5 847.5,588.5 859.5,588.5 860.5,587.5 863.5,587.5 864.5,586.5 865.5,586.5 866.5,585.5 867.5,585.5 868.5,584.5 875.5,584.5 876.5,585.5 881.5,585.5 882.5,584.5 902.5,584.5 903.5,585.5 913.5,585.5 914.5,586.5 935.5,586.5 936.5,587.5 1007.5,587.5" stroke="#808000"/>
<polyline points="14.5,585.5 100.5,585.5 101.5,586.5 106.5,586.5 107.5,587.5 112.5,587.5 113.5,588.5 115.5,588.5 116.5,587.5 243.5,587.5 244.5,588.5 257.5,588.5 258.5,587.5 260.5,587.5 261.5,586.5 262.5,586.5 263.5,585.5 264.5,585.5 265.5,584.5 266.5,583.5 267.5,583.5 268.5,582.5 269.5,582.5 270.5,581.5 275.5,581.5 276.5,580.5 281.5,580.5 282.5,579.5 313.5,579.5 314.5,580.5 319.5,580.5 320.5,581.5 327.5,581.5 328.5,582.5 336.5,582.5 337.5,583.5 345.5,583.5 346.5,584.5 349.5,584.5 350.5,585.5 364.5,585.5 365.5,584.5 374.5,584.5 375.5,585.5 397.5,585.5 398.5,586.5 463.5,586.5 464.5,587.5 514.5,587.5 515.5,588.5 533.5,588.5 534.5,587.5 593.5,587.5 594.5,586.5 637.5,586.5 638.5,587.5 691.5,587.5 692.5,586.5 693.5,585.5 696.5,585.5 697.5,584.5 709.5,584.5 710.5,583.5 714.5,583.5 715.5,584.5 761.5,584.5 762.5,583.5 764.5,583.5 765.5,582.5 768.5,582.5 769.5,581.5 786.5,581.5 787.5,580.5 790.5,580.5 791.5,581.5 797.5,581.5 798.5,582.5 805.5,582.5 806.5,583.5 818.5,583.5 819.5,584.5 836.5,584.5 837.5,585.5 840.5,585.5 841.5,586.5 845.5,586.5 846.5,587.5 849.5,587.5 850.5,588.5 851.5,587.5 862.5,587.5 863.5,586.5 864.5,586.5 865.5,585.5 867.5,585.5 868.5,584.5 893.5,584.5 894.5,583.5 896.5,583.5 897.5,584.5 911.5,584.5 912.5,585.5 935.5,585.5 936.5,586.5 1007.5,586.5" stroke="#d2691e"/>
<polyline points="14.5,582.5 110.5,582.5 111.5,583.5 142.5,583.5 143.5,582.5 222.5,582.5 223.5,583.5 259.5,583.5 260.5,582.5 262.5,582.5 263.5,581.5 264.5,581.5 265.5,580.5 266.5,580.5 267.5,579.5 268.5,579.5 269.5,578.5 270.5,578.5 271.5,577.5 273.5,577.5 274.5,576.5 276.5,576.5 277.5,575.5 279.5,575.5 280.5,574.5 281.5,574.5 282.5,573.5 310.5,573.5 311.5,574.5 312.5,574.5 313.5,575.5 315.5,575.5 316.5,576.5 330.5,576.5 331.5,577.5 345.5,577.5 346.5,578.5 347.5,578.5 348.5,579.5 349.5,579.5 350.5,580.5 351.5,580.5 352.5,581.5 512.5,581.5 513.5,582.5 558.5,582.5 559.5,581.5 599.5,581.5 600.5,580.5 654.5,580.5 655.5,581.5 690.5,581.5 691.5,580.5 694.5,580.5 695.5,579.5 698.5,579.5 699.5,578.5 700.5,579.5 702.5,579.5 703.5,578.5 709.5,578.5 710.5,577.5 757.5,577.5 758.5,576.5 760.5,576.5 761.5,575.5 764.5,575.5 765.5,574.5 785.5,574.5 786.5,573.5 790.5,573.5 791.5,574.5 793.5,574.5 794.5,575.5 796.5,575.5 797.5,576.5 800.5,576.5 801.5,577.5 803.5,577.5 804.5,578.5 807.5,578.5 808.5,579.5 823.5,579.5 824.5,580.5 834.5,580.5 835.5,579.5 840.5,579.5 841.5,580.5 865.5,580.5 866.5,579.5 932.5,579.5 933.5,580.5 1007.5,580.5" stroke="#e080a0"/>
<polyline points="14.5,580.5 56.5,580.5 57.5,581.5 108.5,581.5 109.5,582.5 133.5,582.5 134.5,581.5 175.5,581.5 176.5,582.5 260.5,582.5 261.5,581.5 263.5,581.5 264.5,580.5 265.5,580.5 266.5,579.5 267.5,579.5 268.5,578.5 269.5,578.5 270.5,577.5 271.5,577.5 272.5,576.5 273.5,576.5 274.5,575.5 276.5,575.5 277.5,574.5 279.5,574.5 280.5,573.5 281.5,573.5 282.5,572.5 310.5,572.5 311.5,573.5 312.5,573.5 313.5,574.5 315.5,574.5 316.5,575.5 334.5,575.5 335.5,576.5 346.5,576.5 347.5,577.5 348.5,578.5 349.5,578.5 350.5,579.5 351.5,579.5 352.5,580.5 411.5,580.5 412.5,581.5 690.5,581.5 691.5,580.5 693.5,580.5 694.5,579.5 697.5,579.5 698.5,578.5 702.5,578.5 703.5,577.5 708.5,577.5 709.5,576.5 755.5,576.5 756.5,575.5 760.5,575.5 761.5,574.5 763.5,574.5 764.5,573.5 780.5,573.5 781.5,572.5 790.5,572.5 791.5,573.5 793.5,573.5 794.5,574.5 796.5,574.5 797.5,575.5 799.5,575.5 800.5,576.5 802.5,576.5 803.5,577.5 806.5,577.5 807.5,578.5 809.5,578.5 810.5,579.5 816.5,579.5 817.5,580.5 845.5,580.5 846.5,581.5 857.5,581.5 858.5,580.5 864.5,580.5 865.5,579.5 881.5,579.5 882.5,578.5 913.5,578.5 914.5,579.5 1007.5,579.5" stroke="#30e000"/>
<polyline points="14.5,584.5 102.5,584.5 103.5,585.5 108.5,585.5 109.5,586.5 121.5,586.5 122.5,587.5 187.5,587.5 188.5,586.5 260.5,586.5 261.5,585.5 262.5,585.5 263.5,584.5 264.5,583.5 265.5,583.5 266.5,582.5 267.5,582.5 268.5,581.5 269.5,581.5 270.5,580.5 273.5,580.5 274.5,579.5 278.5,579.5 279.5,578.5 312.5,578.5 313.5,579.5 317.5,579.5 318.5,580.5 322.5,580.5 323.5,581.5 328.5,581.5 329.5,582.5 338.5,582.5 339.5,583.5 346.5,583.5 347.5,584.5 349.5,584.5 350.5,585.5 401.5,585.5 402.5,584.5 412.5,584.5 413.5,585.5 515.5,585.5 516.5,586.5 524.5,586.5 525.5,585.5 539.5,585.5 540.5,586.5 590.5,586.5 591.5,587.5 594.5,587.5 595.5,586.5 692.5,586.5 693.5,585.5 696.5,585.5 697.5,584.5 706.5,584.5 707.5,583.5 761.5,583.5 762.5,582.5 764.5,582.5 765.5,581.5 769.5,581.5 770.5,580.5 795.5,580.5 796.5,581.5 801.5,581.5 802.5,582.5 803.5,581.5 806.5,581.5 807.5,582.5 821.5,582.5 822.5,583.5 837.5,583.5 838.5,584.5 842.5,584.5 843.5,585.5 846.5,585.5 847.5,586.5 859.5,586.5 860.5,585.5 862.5,585.5 863.5,584.5 865.5,584.5 866.5,583.5 867.5,583.5 868.5,582.5 909.5,582.5 910.5,583.5 934.5,583.5 935.5,584.5 1007.5,584.5" stroke="#e0702a"/>
<polyline points="14.5,583.5 73.5,583.5 74.5,582.5 106.5,582.5 107.5,583.5 256.5,583.5 257.5,582.5 262.5,582.5 263.5,581.5 264.5,580.5 265.5,580.5 266.5,579.5 267.5,579.5 268.5,578.5 269.5,578.5 270.5,577.5 272.5,577.5 273.5,576.5 275.5,576.5 276.5,575.5 278.5,575.5 279.5,574.5 281.5,574.5 282.5,573.5 310.5,573.5 311.5,574.5 313.5,574.5 314.5,575.5 315.5,575.5 316.5,576.5 330.5,576.5 331.5,577.5 345.5,577.5 346.5,578.5 347.5,578.5 348.5,579.5 349.5,579.5 350.5,580.5 351.5,580.5 352.5,581.5 514.5,581.5 515.5,582.5 555.5,582.5 556.5,581.5 646.5,581.5 647.5,582.5 691.5,582.5 692.5,581.5 695.5,581.5 696.5,580.5 699.5,580.5 700.5,579.5 706.5,579.5 707.5,578.5 723.5,578.5 724.5,577.5 760.5,577.5 761.5,576.5 763.5,576.5 764.5,575.5 769.5,575.5 770.5,574.5 791.5,574.5 792.5,575.5 795.5,575.5 796.5,576.5 799.5,576.5 800.5,577.5 803.5,577.5 804.5,578.5 807.5,578.5 808.5,579.5 822.5,579.5 823.5,580.5 840.5,580.5 841.5,581.5 849.5,581.5 850.5,582.5 852.5,582.5 853.5,581.5 864.5,581.5 865.5,580.5 888.5,580.5 889.5,579.5 899.5,579.5 900.5,580.5 936.5,580.5 937.5,581.5 1007.5,581.5" stroke="#a06030"/>
<polyline points="14.5,586.5 66.5,586.5 67.5,587.5 103.5,587.5 104.5,588.5 109.5,588.5 110.5,589.5 114.5,589.5 115.5,590.5 129.5,590.5 130.5,589.5 254.5,589.5 255.5,590.5 256.5,590.5 257.5,589.5 260.5,589.5 261.5,588.5 262.5,587.5 263.5,587.5 264.5,586.5 265.5,585.5 266.5,585.5 267.5,584.5 268.5,584.5 269.5,583.5 272.5,583.5 273.5,582.5 280.5,582.5 281.5,581.5 311.5,581.5 312.5,582.5 316.5,582.5 317.5,583.5 329.5,583.5 330.5,584.5 337.5,584.5 338.5,585.5 345.5,585.5 346.5,586.5 350.5,586.5 351.5,587.5 356.5,587.5 357.5,586.5 380.5,586.5 381.5,587.5 415.5,587.5 416.5,588.5 515.5,588.5 516.5,589.5 524.5,589.5 525.5,588.5 580.5,588.5 581.5,587.5 634.5,587.5 635.5,586.5 693.5,586.5 694.5,585.5 698.5,585.5 699.5,584.5 700.5,585.5 752.5,585.5 753.5,584.5 760.5,584.5 761.5,583.5 764.5,583.5 765.5,582.5 767.5,582.5 768.5,581.5 778.5,581.5 779.5,580.5 793.5,580.5 794.5,581.5 802.5,581.5 803.5,582.5 815.5,582.5 816.5,583.5 834.5,583.5 835.5,584.5 839.5,584.5 840.5,585.5 843.5,585.5 844.5,586.5 847.5,586.5 848.5,587.5 857.5,587.5 858.5,586.5 863.5,586.5 864.5,585.5 865.5,585.5 866.5,584.5 868.5,584.5 869.5,583.5 898.5,583.5 899.5,584.5 912.5,584.5 913.5,585.5 933.5,585.5 934.5,586.5 958.5,586.5 959.5,585.5 1007.5,585.5" stroke="#b0a0e0"/>
<polyline points="14.5,580.5 93.5,580.5 94.5,579.5 213.5,579.5 214.5,580.5 262.5,580.5 263.5,579.5 264.5,579.5 265.5,578.5 266.5,578.5 267.5,577.5 268.5,577.5 269.5,576.5 270.5,576.5 271.5,575.5 272.5,575.5 273.5,574.5 274.5,574.5 275.5,573.5 276.5,572.5 277.5,572.5 278.5,571.5 279.5,571.5 280.5,570.5 281.5,570.5 282.5,569.5 310.5,569.5 311.5,570.5 312.5,570.5 313.5,571.5 314.5,571.5 315.5,572.5 337.5,572.5 338.5,573.5 346.5,573.5 347.5,574.5 348.5,575.5 349.5,575.5 350.5,576.5 351.5,577.5 356.5,577.5 357.5,578.5 397.5,578.5 398.5,579.5 691.5,579.5 692.5,578.5 694.5,578.5 695.5,577.5 697.5,577.5 698.5,576.5 702.5,576.5 703.5,575.5 707.5,575.5 708.5,574.5 757.5,574.5 758.5,573.5 760.5,573.5 761.5,572.5 764.5,572.5 765.5,571.5 788.5,571.5 789.5,570.5 790.5,570.5 791.5,571.5 793.5,571.5 794.5,572.5 795.5,572.5 796.5,573.5 798.5,573.5 799.5,574.5 801.5,574.5 802.5,575.5 804.5,575.5 805.5,576.5 806.5,576.5 807.5,577.5 809.5,577.5 810.5,578.5 858.5,578.5 859.5,579.5 867.5,579.5 868.5,578.5 908.5,578.5 909.5,579.5 1000.5,579.5 1001.5,578.5 1007.5,578.5" stroke="#b0a0e0"/>
<polyline points="14.5,585.5 53.5,585.5 54.5,586.5 103.5,586.5 104.5,587.5 109.5,587.5 110.5,588.5 260.5,588.5 261.5,587.5 262.5,586.5 263.5,586.5 264.5,585.5 265.5,585.5 266.5,584.5 267.5,583.5 268.5,583.5 269.5,582.5 272.5,582.5 273.5,581.5 278.5,581.5 279.5,580.5 312.5,580.5 313.5,581.5 318.5,581.5 319.5,582.5 326.5,582.5 327.5,583.5 335.5,583.5 336.5,584.5 344.5,584.5 345.5,585.5 348.5,585.5 349.5,586.5 379.5,586.5 380.5,585.5 406.5,585.5 407.5,586.5 430.5,586.5 431.5,585.5 513.5,585.5 514.5,586.5 517.5,586.5 518.5,587.5 519.5,587.5 520.5,586.5 607.5,586.5 608.5,585.5 692.5,585.5 693.5,584.5 697.5,584.5 698.5,583.5 709.5,583.5 710.5,582.5 718.5,582.5 719.5,583.5 761.5,583.5 762.5,582.5 764.5,582.5 765.5,581.5 766.5,582.5 767.5,582.5 768.5,581.5 779.5,581.5 780.5,580.5 792.5,580.5 793.5,581.5 798.5,581.5 799.5,582.5 806.5,582.5 807.5,583.5 821.5,583.5 822.5,584.5 836.5,584.5 837.5,585.5 841.5,585.5 842.5,586.5 849.5,586.5 850.5,587.5 851.5,587.5 852.5,586.5 862.5,586.5 863.5,585.5 865.5,585.5 866.5,584.5 867.5,584.5 868.5,583.5 869.5,583.5 870.5,584.5 889.5,584.5 890.5,583.5 898.5,583.5 899.5,584.5 914.5,584.5 915.5,585.5 1001.5,585.5 1002.5,584.5 1007.5,584.5" stroke="#a06030"/>
<polyline points="14.5,583.5 89.5,583.5 90.5,584.5 106.5,584.5 107.5,585.5 260.5,585.5 261.5,584.5 263.5,584.5 264.5,583.5 265.5,582.5 266.5,582.5 267.5,581.5 268.5,581.5 269.5,580.5 270.5,580.5 271.5,579.5 274.5,579.5 275.5,578.5 276.5,578.5 277.5,577.5 279.5,577.5 280.5,576.5 312.5,576.5 313.5,577.5 315.5,577.5 316.5,578.5 325.5,578.5 326.5,579.5 338.5,579.5 339.5,580.5 346.5,580.5 347.5,581.5 348.5,581.5 349.5,582.5 351.5,582.5 352.5,583.5 396.5,583.5 397.5,584.5 410.5,584.5 411.5,583.5 434.5,583.5 435.5,584.5 515.5,584.5 516.5,585.5 523.5,585.5 524.5,584.5 691.5,584.5 692.5,583.5 695.5,583.5 696.5,582.5 699.5,582.5 700.5,581.5 755.5,581.5 756.5,580.5 761.5,580.5 762.5,579.5 764.5,579.5 765.5,578.5 771.5,578.5 772.5,577.5 792.5,577.5 793.5,578.5 796.5,578.5 797.5,579.5 800.5,579.5 801.5,580.5 805.5,580.5 806.5,581.5 813.5,581.5 814.5,582.5 837.5,582.5 838.5,583.5 843.5,583.5 844.5,584.5 863.5,584.5 864.5,583.5 866.5,583.5 867.5,582.5 914.5,582.5 915.5,583.5 1007.5,583.5" stroke="#c030a0"/>
<polyline points="14.5,580.5 100.5,580.5 101.5,581.5 126.5,581.5 127.5,580.5 148.5,580.5 149.5,581.5 221.5,581.5 222.5,580.5 262.5,580.5 263.5,579.5 264.5,579.5 265.5,578.5 266.5,578.5 267.5,577.5 268.5,577.5 269.5,576.5 270.5,576.5 271.5,575.5 273.5,575.5 274.5,574.5 275.5,574.5 276.5,573.5 277.5,573.5 278.5,572.5 280.5,572.5 281.5,571.5 292.5,571.5 293.5,572.5 312.5,572.5 313.5,573.5 314.5,573.5 315.5,574.5 345.5,574.5 346.5,575.5 347.5,575.5 348.5,576.5 349.5,577.5 350.5,577.5 351.5,578.5 354.5,578.5 355.5,579.5 388.5,579.5 389.5,580.5 535.5,580.5 536.5,579.5 577.5,579.5 578.5,580.5 691.5,580.5 692.5,579.5 694.5,579.5 695.5,578.5 698.5,578.5 699.5,577.5 703.5,577.5 704.5,576.5 725.5,576.5 726.5,575.5 756.5,575.5 757.5,574.5 760.5,574.5 761.5,573.5 762.5,574.5 763.5,573.5 769.5,573.5 770.5,572.5 790.5,572.5 791.5,573.5 793.5,573.5 794.5,574.5 796.5,574.5 797.5,575.5 799.5,575.5 800.5,576.5 802.5,576.5 803.5,577.5 805.5,577.5 806.5,578.5 808.5,578.5 809.5,579.5 861.5,579.5 862.5,578.5 1007.5,578.5" stroke="#9aaa10"/>
<polyline points="14.5,581.5 101.5,581.5 102.5,582.5 241.5,582.5 242.5,581.5 260.5,581.5 261.5,580.5 263.5,580.5 264.5,579.5 265.5,579.5 266.5,578.5 267.5,578.5 268.5,577.5 269.5,576.5 271.5,576.5 272.5,575.5 273.5,575.5 274.5,574.5 276.5,574.5 277.5,573.5 279.5,573.5 280.5,572.5 312.5,572.5 313.5,573.5 315.5,573.5 316.5,574.5 330.5,574.5 331.5,575.5 345.5,575.5 346.5,576.5 347.5,576.5 348.5,577.5 349.5,577.5 350.5,578.5 351.5,578.5 352.5,579.5 375.5,579.5 376.5,580.5 690.5,580.5 691.5,579.5 694.5,579.5 695.5,578.5 697.5,578.5 698.5,577.5 702.5,577.5 703.5,576.5 755.5,576.5 756.5,575.5 759.5,575.5 760.5,574.5 763.5,574.5 764.5,573.5 769.5,573.5 770.5,572.5 790.5,572.5 791.5,573.5 794.5,573.5 795.5,574.5 796.5,575.5 798.5,575.5 799.5,576.5 801.5,576.5 802.5,577.5 805.5,577.5 806.5,578.5 808.5,578.5 809.5,579.5 844.5,579.5 845.5,580.5 862.5,580.5 863.5,579.5 886.5,579.5 887.5,578.5 900.5,578.5 901.5,579.5 948.5,579.5 949.5,580.5 1007.5,580.5" stroke="#60b0f0"/>
<polyline points="14.5,582.5 107.5,582.5 108.5,583.5 260.5,583.5 261.5,582.5 263.5,582.5 264.5,581.5 265.5,580.5 266.5,580.5 267.5,579.5 268.5,579.5 269.5,578.5 271.5,578.5 272.5,577.5 274.5,577.5 275.5,576.5 277.5,576.5 278.5,575.5 281.5,575.5 282.5,574.5 310.5,574.5 311.5,575.5 313.5,575.5 314.5,576.5 319.5,576.5 320.5,577.5 332.5,577.5 333.5,578.5 345.5,578.5 346.5,579.5 347.5,579.5 348.5,580.5 350.5,580.5 351.5,581.5 352.5,581.5 353.5,582.5 473.5,582.5 474.5,583.5 513.5,583.5 514.5,584.5 591.5,584.5 592.5,583.5 689.5,583.5 690.5,582.5 694.5,582.5 695.5,581.5 697.5,581.5 698.5,580.5 699.5,580.5 700.5,579.5 707.5,579.5 708.5,578.5 760.5,578.5 761.5,577.5 763.5,577.5 764.5,576.5 768.5,576.5 769.5,575.5 792.5,575.5 793.5,576.5 796.5,576.5 797.5,577.5 800.5,577.5 801.5,578.5 805.5,578.5 806.5,579.5 809.5,579.5 810.5,580.5 836.5,580.5 837.5,581.5 843.5,581.5 844.5,582.5 863.5,582.5 864.5,581.5 867.5,581.5 868.5,580.5 912.5,580.5 913.5,581.5 1007.5,581.5" stroke="#ff7050"/>
<polyline points="14.5,586.5 103.5,586.5 104.5,587.5 108.5,587.5 109.5,588.5 113.5,588.5 114.5,589.5 256.5,589.5 257.5,588.5 260.5,588.5 261.5,587.5 262.5,586.5 263.5,586.5 264.5,585.5 265.5,585.5 266.5,584.5 267.5,583.5 268.5,583.5 269.5,582.5 273.5,582.5 274.5,581.5 315.5,581.5 316.5,582.5 322.5,582.5 323.5,583.5 329.5,583.5 330.5,584.5 336.5,584.5 337.5,585.5 339.5,585.5 340.5,586.5 346.5,586.5 347.5,587.5 364.5,587.5 365.5,586.5 384.5,586.5 385.5,587.5 421.5,587.5 422.5,588.5 476.5,588.5 477.5,587.5 512.5,587.5 513.5,588.5 515.5,588.5 516.5,589.5 517.5,588.5 518.5,589.5 519.5,589.5 520.5,588.5 559.5,588.5 560.5,587.5 691.5,587.5 692.5,586.5 696.5,586.5 697.5,585.5 762.5,585.5 763.5,584.5 765.5,584.5 766.5,583.5 769.5,583.5 770.5,582.5 786.5,582.5 787.5,581.5 791.5,581.5 792.5,582.5 800.5,582.5 801.5,583.5 814.5,583.5 815.5,584.5 833.5,584.5 834.5,585.5 838.5,585.5 839.5,586.5 842.5,586.5 843.5,587.5 846.5,587.5 847.5,588.5 861.5,588.5 862.5,587.5 863.5,587.5 864.5,586.5 866.5,586.5 867.5,585.5 870.5,585.5 871.5,584.5 873.5,584.5 874.5,585.5 891.5,585.5 892.5,584.5 897.5,584.5 898.5,585.5 910.5,585.5 911.5,586.5 927.5,586.5 928.5,587.5 1007.5,587.5" stroke="#d2691e"/>
<polyline points="14.5,578.5 45.5,578.5 46.5,579.5 207.5,579.5 208.5,578.5 253.5,578.5 254.5,577.5 263.5,577.5 264.5,576.5 265.5,576.5 266.5,575.5 267.5,575.5 268.5,574.5 269.5,574.5 270.5,573.5 271.5,573.5 272.5,572.5 273.5,572.5 274.5,571.5 275.5,571.5 276.5,570.5 277.5,570.5 278.5,569.5 279.5,569.5 280.5,568.5 281.5,568.5 282.5,567.5 286.5,567.5 287.5,568.5 312.5,568.5 313.5,569.5 314.5,569.5 315.5,570.5 345.5,570.5 346.5,571.5 347.5,572.5 348.5,572.5 349.5,573.5 350.5,574.5 351.5,575.5 354.5,575.5 355.5,576.5 362.5,576.5 363.5,577.5 424.5,577.5 425.5,576.5 692.5,576.5 693.5,575.5 695.5,575.5 696.5,574.5 699.5,574.5 700.5,573.5 703.5,573.5 704.5,572.5 709.5,572.5 710.5,571.5 728.5,571.5 729.5,572.5 756.5,572.5 757.5,571.5 759.5,571.5 760.5,570.5 763.5,570.5 764.5,569.5 785.5,569.5 786.5,570.5 792.5,570.5 793.5,571.5 794.5,571.5 795.5,572.5 797.5,572.5 798.5,573.5 799.5,573.5 800.5,574.5 802.5,574.5 803.5,575.5 804.5,575.5 805.5,576.5 807.5,576.5 808.5,577.5 809.5,577.5 810.5,578.5 847.5,578.5 848.5,577.5 884.5,577.5 885.5,576.5 1007.5,576.5" stroke="#60b0f0"/>
<polyline points="14.5,588.5 104.5,588.5 105.5,589.5 108.5,589.5 109.5,590.5 114.5,590.5 115.5,591.5 256.5,591.5 257.5,590.5 260.5,590.5 261.5,589.5 262.5,588.5 263.5,588.5 264.5,587.5 265.5,586.5 266.5,586.5 267.5,585.5 268.5,585.5 269.5,584.5 272.5,584.5 273.5,583.5 285.5,583.5 286.5,582.5 305.5,582.5 306.5,583.5 315.5,583.5 316.5,584.5 322.5,584.5 323.5,585.5 328.5,585.5 329.5,586.5 335.5,586.5 336.5,587.5 337.5,587.5 338.5,586.5 341.5,586.5 342.5,587.5 348.5,587.5 349.5,588.5 358.5,588.5 359.5,587.5 401.5,587.5 402.5,588.5 414.5,588.5 415.5,587.5 512.5,587.5 513.5,588.5 515.5,588.5 516.5,589.5 523.5,589.5 524.5,588.5 556.5,588.5 557.5,589.5 607.5,589.5 608.5,588.5 632.5,588.5 633.5,589.5 690.5,589.5 691.5,588.5 696.5,588.5 697.5,587.5 760.5,587.5 761.5,586.5 764.5,586.5 765.5,585.5 767.5,585.5 768.5,584.5 774.5,584.5 775.5,583.5 797.5,583.5 798.5,584.5 826.5,584.5 827.5,585.5 836.5,585.5 837.5,586.5 840.5,586.5 841.5,587.5 844.5,587.5 845.5,588.5 848.5,588.5 849.5,589.5 855.5,589.5 856.5,588.5 863.5,588.5 864.5,587.5 865.5,586.5 867.5,586.5 868.5,585.5 871.5,585.5 872.5,586.5 873.5,586.5 874.5,585.5 905.5,585.5 906.5,586.5 917.5,586.5 918.5,587.5 919.5,586.5 935.5,586.5 936.5,587.5 991.5,587.5 992.5,588.5 1007.5,588.5" stroke="#e0702a"/>
<polyline points="14.5,582.5 100.5,582.5 101.5,583.5 106.5,583.5 107.5,582.5 108.5,582.5 109.5,583.5 188.5,583.5 189.5,584.5 258.5,584.5 259.5,583.5 262.5,583.5 263.5,582.5 264.5,582.5 265.5,581.5 266.5,580.5 267.5,580.5 268.5,579.5 269.5,579.5 270.5,578.5 273.5,578.5 274.5,577.5 276.5,577.5 277.5,576.5 279.5,576.5 280.5,575.5 312.5,575.5 313.5,576.5 315.5,576.5 316.5,577.5 328.5,577.5 329.5,578.5 345.5,578.5 346.5,579.5 347.5,579.5 348.5,580.5 349.5,580.5 350.5,581.5 351.5,581.5 352.5,582.5 400.5,582.5 401.5,581.5 409.5,581.5 410.5,582.5 537.5,582.5 538.5,581.5 691.5,581.5 692.5,580.5 695.5,580.5 696.5,579.5 699.5,579.5 700.5,578.5 757.5,578.5 758.5,577.5 761.5,577.5 762.5,576.5 763.5,575.5 767.5,575.5 768.5,574.5 792.5,574.5 793.5,575.5 796.5,575.5 797.5,576.5 800.5,576.5 801.5,577.5 803.5,577.5 804.5,578.5 807.5,578.5 808.5,579.5 828.5,579.5 829.5,580.5 842.5,580.5 843.5,581.5 863.5,581.5 864.5,580.5 878.5,580.5 879.5,579.5 903.5,579.5 904.5,580.5 1007.5,580.5" stroke="#30e000"/>
<polyline points="14.5,582.5 105.5,582.5 106.5,583.5 114.5,583.5 115.5,584.5 256.5,584.5 257.5,583.5 261.5,583.5 262.5,582.5 263.5,582.5 264.5,581.5 265.5,581.5 266.5,580.5 267.5,579.5 268.5,579.5 269.5,578.5 271.5,578.5 272.5,577.5 275.5,577.5 276.5,576.5 278.5,576.5 279.5,575.5 312.5,575.5 313.5,576.5 316.5,576.5 317.5,577.5 328.5,577.5 329.5,578.5 342.5,578.5 343.5,579.5 347.5,579.5 348.5,580.5 349.5,580.5 350.5,581.5 351.5,581.5 352.5,582.5 404.5,582.5 405.5,583.5 452.5,583.5 453.5,582.5 500.5,582.5 501.5,583.5 516.5,583.5 517.5,584.5 521.5,584.5 522.5,583.5 537.5,583.5 538.5,582.5 692.5,582.5 693.5,581.5 696.5,581.5 697.5,580.5 700.5,580.5 701.5,579.5 755.5,579.5 756.5,578.5 761.5,578.5 762.5,577.5 764.5,577.5 765.5,576.5 773.5,576.5 774.5,575.5 791.5,575.5 792.5,576.5 795.5,576.5 796.5,577.5 799.5,577.5 800.5,578.5 804.5,578.5 805.5,579.5 809.5,579.5 810.5,580.5 835.5,580.5 836.5,581.5 839.5,581.5 840.5,582.5 844.5,582.5 845.5,583.5 862.5,583.5 863.5,582.5 866.5,582.5 867.5,581.5 915.5,581.5 916.5,582.5 956.5,582.5 957.5,583.5 1007.5,583.5" stroke="#b0a0e0"/>
<polyline points="14.5,591.5 44.5,591.5 45.5,590.5 58.5,590.5 59.5,591.5 90.5,591.5 91.5,590.5 115.5,590.5 116.5,591.5 119.5,591.5 120.5,592.5 128.5,592.5 129.5,593.5 151.5,593.5 152.5,594.5 219.5,594.5 220.5,595.5 240.5,595.5 241.5,594.5 257.5,594.5 258.5,593.5 259.5,591.5 260.5,590.5 261.5,588.5 262.5,587.5 263.5,587.5 264.5,586.5 266.5,586.5 267.5,585.5 268.5,585.5 269.5,584.5 273.5,584.5 274.5,583.5 278.5,583.5 279.5,582.5 282.5,582.5" stroke="#8b8b4a"/>
<polyline points="128.5,592.5 131.5,592.5 132.5,593.5 166.5,593.5 167.5,592.5 168.5,592.5 169.5,591.5 170.5,591.5 171.5,590.5 172.5,590.5" stroke="#d2691e"/>
<polyline points="14.5,575.5 60.5,575.5 61.5,576.5 128.5,576.5 129.5,577.5 136.5,577.5 137.5,578.5 140.5,578.5" stroke="#d040c0"/>
<polyline points="14.5,573.5 55.5,573.5 56.5,574.5 57.5,574.5 58.5,575.5 68.5,575.5 69.5,576.5 80.5,576.5" stroke="#a0a0f0"/>
<polyline points="14.5,571.5 57.5,571.5 58.5,572.5 161.5,572.5 162.5,573.5 163.5,573.5 164.5,574.5 166.5,574.5 167.5,575.5 169.5,575.5 170.5,576.5 171.5,576.5 172.5,577.5 173.5,577.5" stroke="#d04020"/>
<polyline points="240.5,577.5 241.5,576.5 263.5,576.5 264.5,575.5 265.5,574.5 267.5,574.5 268.5,573.5 269.5,572.5 272.5,572.5 273.5,571.5 275.5,571.5 276.5,570.5 280.5,570.5 281.5,569.5 282.5,569.5" stroke="#d04020"/>
<polyline points="650.5,577.5 651.5,576.5 701.5,576.5 702.5,575.5 704.5,575.5 705.5,574.5 723.5,574.5 724.5,573.5 746.5,573.5 747.5,572.5 761.5,572.5 762.5,571.5 773.5,571.5 774.5,570.5 782.5,570.5 783.5,571.5 787.5,571.5 788.5,572.5 837.5,572.5 838.5,573.5 842.5,573.5 843.5,574.5 847.5,574.5 848.5,575.5 896.5,575.5 897.5,576.5 998.5,576.5" stroke="#d04020"/>
<polyline points="14.5,565.5 15.5,565.5 16.5,564.5 85.5,564.5 86.5,565.5 174.5,565.5 175.5,566.5 176.5,566.5 177.5,567.5 179.5,567.5 180.5,568.5 181.5,568.5 182.5,569.5 183.5,569.5 184.5,570.5 186.5,570.5 187.5,571.5 188.5,571.5 189.5,572.5 217.5,572.5 218.5,571.5 225.5,571.5 226.5,570.5 236.5,570.5 237.5,569.5 245.5,569.5 246.5,568.5 262.5,568.5" stroke="#8b5a5a"/>
<polyline points="14.5,568.5 30.5,568.5 31.5,569.5 65.5,569.5 66.5,570.5 80.5,570.5 81.5,569.5 90.5,569.5 91.5,570.5 131.5,570.5 132.5,569.5 138.5,569.5 139.5,568.5 146.5,568.5 147.5,567.5 152.5,567.5 153.5,566.5 174.5,566.5 175.5,567.5 176.5,567.5 177.5,568.5 178.5,568.5 179.5,569.5 180.5,569.5 181.5,570.5 182.5,570.5 183.5,571.5 184.5,571.5 185.5,572.5 186.5,572.5 187.5,573.5 188.5,573.5 189.5,574.5 210.5,574.5 211.5,573.5 215.5,573.5 216.5,571.5 233.5,571.5 234.5,570.5 235.5,570.5 236.5,569.5 240.5,569.5 241.5,568.5 246.5,568.5 247.5,567.5 252.5,567.5 253.5,566.5 310.5,566.5 311.5,569.5 313.5,569.5 314.5,570.5 345.5,570.5 346.5,571.5 347.5,571.5 348.5,572.5 349.5,573.5 350.5,574.5 351.5,574.5 352.5,575.5 358.5,575.5 359.5,574.5 365.5,574.5 366.5,573.5 367.5,573.5 368.5,572.5 410.5,572.5 411.5,571.5 436.5,571.5 437.5,572.5 452.5,572.5 453.5,573.5 480.5,573.5 481.5,572.5 495.5,572.5 496.5,573.5 505.5,573.5 506.5,574.5 507.5,574.5 508.5,575.5 509.5,576.5 511.5,576.5 512.5,577.5 525.5,577.5 526.5,576.5 575.5,576.5 576.5,575.5 620.5,575.5 621.5,574.5 624.5,574.5 625.5,573.5 627.5,573.5 628.5,572.5 632.5,572.5 633.5,571.5 637.5,571.5 638.5,570.5 641.5,570.5 642.5,569.5 643.5,569.5 644.5,568.5 647.5,568.5 648.5,569.5 700.5,569.5 701.5,568.5 703.5,568.5 704.5,567.5 720.5,567.5 721.5,565.5 750.5,565.5 751.5,564.5 755.5,564.5 756.5,563.5 800.5,563.5 801.5,564.5 836.5,564.5 837.5,565.5 842.5,565.5 843.5,566.5 849.5,566.5 850.5,567.5 862.5,567.5 863.5,566.5 876.5,566.5 877.5,565.5 883.5,565.5 884.5,564.5 918.5,564.5 919.5,565.5 920.5,566.5 922.5,566.5 923.5,567.5 927.5,567.5 928.5,568.5 983.5,568.5 984.5,569.5 1007.5,569.5" stroke="#9a7d2e"/>
<polyline points="14.5,567.5 174.5,567.5 175.5,568.5 177.5,568.5 178.5,569.5 180.5,569.5 181.5,570.5 182.5,570.5 183.5,571.5 185.5,571.5 186.5,572.5 188.5,572.5 189.5,573.5 232.5,573.5 233.5,572.5 234.5,572.5 235.5,571.5 236.5,571.5 237.5,570.5 240.5,570.5 241.5,569.5 246.5,569.5 247.5,568.5 312.5,568.5 313.5,569.5 315.5,569.5 316.5,570.5 331.5,570.5 332.5,571.5 345.5,571.5 346.5,572.5 347.5,572.5 348.5,573.5 349.5,574.5 350.5,575.5 351.5,575.5 352.5,576.5 358.5,576.5 359.5,575.5 367.5,575.5 368.5,574.5 502.5,574.5 503.5,575.5 506.5,575.5 507.5,576.5 510.5,576.5 511.5,577.5 570.5,577.5 571.5,576.5 621.5,576.5 622.5,575.5 624.5,575.5 625.5,574.5 628.5,574.5 629.5,573.5 632.5,573.5 633.5,572.5 637.5,572.5 638.5,571.5 643.5,571.5 644.5,570.5 702.5,570.5 703.5,569.5 707.5,569.5 708.5,568.5 725.5,568.5 726.5,567.5 743.5,567.5 744.5,566.5 751.5,566.5 752.5,565.5 761.5,565.5 762.5,564.5 779.5,564.5 780.5,563.5 790.5,563.5 791.5,564.5 792.5,565.5 837.5,565.5 838.5,566.5 841.5,566.5 842.5,567.5 845.5,567.5 846.5,568.5 850.5,568.5 851.5,569.5 870.5,569.5 871.5,568.5 877.5,568.5 878.5,567.5 882.5,567.5 883.5,566.5 887.5,566.5 888.5,565.5 892.5,565.5 893.5,564.5 908.5,564.5 909.5,565.5 924.5,565.5 925.5,566.5 982.5,566.5 983.5,567.5 984.5,568.5 985.5,568.5 986.5,569.5 1007.5,569.5" stroke="#000"/>
<polyline points="14.5,555.5 1007.5,555.5" stroke="#000"/>
<polyline points="14.5,562.5 1007.5,562.5" stroke="#000"/>
<polyline points="14.5,577.5 1007.5,577.5" stroke="#000"/>
</g>
</svg>
</body></html>
